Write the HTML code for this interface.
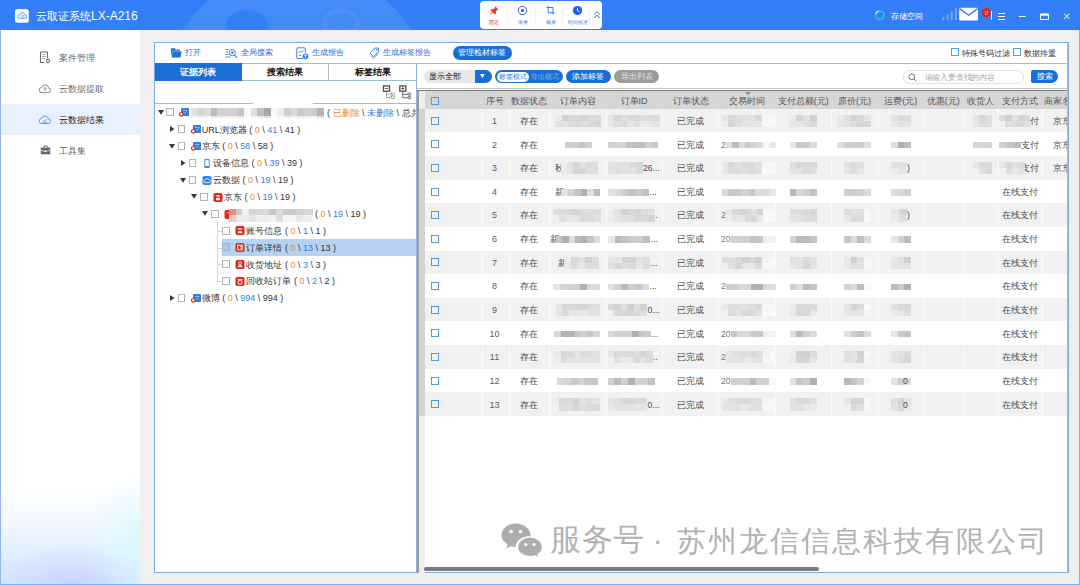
<!DOCTYPE html>
<html><head><meta charset="utf-8">
<style>
*{box-sizing:border-box;margin:0;padding:0}
html,body{width:1080px;height:585px;overflow:hidden;background:#f0f0f0;font-family:"Liberation Sans",sans-serif;font-size:9px;color:#333}
.abs{position:absolute}
#title{position:absolute;left:0;top:0;width:1080px;height:30px;background:#337ff8;overflow:hidden}
#title .c1{position:absolute;left:161px;top:-33px;width:272px;height:272px;border-radius:50%;background:rgba(255,255,255,.085)}
#title .c2{position:absolute;left:226px;top:10px;width:42px;height:30px;border-radius:50%;background:#337ff8}
#title .tt{position:absolute;left:36px;top:8px;font-size:11.500px;color:#fff;line-height:16px;white-space:nowrap}
#side{position:absolute;left:0;top:30px;width:140px;height:555px;background:#fff;border-left:1px solid #8db8f5;border-bottom:1px solid #8db8f5;overflow:hidden}
#side .glow{position:absolute;left:0;bottom:0;width:140px;height:150px;background:radial-gradient(ellipse 80px 42px at 72px 152px,rgba(200,208,255,.9) 0%,rgba(205,215,255,.45) 55%,rgba(255,255,255,0) 100%),radial-gradient(ellipse 62px 85px at 142px 118px,rgba(214,250,255,.95) 0%,rgba(222,250,255,.55) 50%,rgba(255,255,255,0) 100%),linear-gradient(180deg,rgba(255,255,255,0) 0,rgba(255,255,255,0) 35%,rgba(228,240,255,.55) 62%,rgba(208,226,255,.95) 100%)}
.nav{position:absolute;left:0;width:140px;height:31px;font-size:9px;color:#6a6a6a;line-height:33px;padding-left:58px;white-space:nowrap}
.nav.sel{background:#e9f1fe;color:#222}
.nav svg{position:absolute}
#panel{position:absolute;left:154px;top:42px;width:914.500px;height:531px;background:#fff;border:1px solid #79abec}
.tb{position:absolute;top:47px;font-size:7.9px;color:#1a6fd6;line-height:12px;white-space:nowrap}
.pill{position:absolute;border-radius:8px;color:#fff;text-align:center;white-space:nowrap;font-size:7.9px}
.tab{position:absolute;top:63px;height:18px;font-size:9px;font-weight:bold;color:#111;text-align:center;line-height:17px;border-top:1px solid #a4b9d6;border-bottom:1px solid #a4b9d6;border-right:1px solid #b8b8b8;background:#fff}
.tab.on{background:#1a6fd6;color:#fff;border-color:#1a6fd6}
.tr{position:absolute;height:17px;line-height:17px;font-size:9px;color:#333;white-space:pre}
.tr .cb{position:absolute;top:4px;width:8px;height:8px;border:1px solid #a8a8a8;background:#fff}
.tr .ar{position:absolute;top:0;font-size:7px;color:#333}
.tr .ic{position:absolute;top:4px;width:9px;height:9px;border-radius:2px}
.tr .tx{position:absolute;top:0}
.o{color:#f08a1e}.b{color:#2f7fe0}
.blur{position:absolute;background:#d9d9d9;filter:blur(1.5px)}
#hdr{position:absolute;left:425px;top:91px;width:632px;height:18px;background:#d5d5d5}
.th{position:absolute;top:91.600px;height:18px;line-height:18px;font-size:9px;color:#555;text-align:center;white-space:nowrap;transform:translateX(-50%)}
.row{position:absolute;left:425px;width:632px;height:23.6px}
.row.g{background:#f1f1f1}
.td{position:absolute;font-size:9px;color:#4a4a4a;white-space:nowrap;transform:translate(-50%,-50%);line-height:12px}
.tdl{position:absolute;font-size:8.600px;color:#4a4a4a;white-space:nowrap;transform:translate(0,-50%);line-height:12px}
.mz{position:absolute;overflow:hidden;filter:blur(.7px)}
.mz i{position:absolute;display:block}
.ck{position:absolute;left:431px;width:8px;height:8px;border:1px solid #4a8fdc;background:#fff}
.sm{position:absolute;background:#cfcfcf;filter:blur(1.2px);height:8px;border-radius:1px}
</style></head><body>
<div id="title">
 <div class="c1"></div><div class="c2"></div><div class="abs" style="left:322px;top:8px;width:38px;height:30px;border-radius:50%;border:5px solid rgba(255,255,255,.06)"></div>
 <svg class="abs" style="left:14.700px;top:9.300px" width="14" height="14" viewBox="0 0 14 14"><rect x="0" y="0" width="13.800" height="13.800" rx="2.500" fill="#fff"/><path d="M4.300 9.600h5.600a1.800 1.800 0 0 0 .3-3.600 2.800 2.800 0 0 0-5.400-.5A2.100 2.100 0 0 0 4.300 9.600z" fill="#e4effe" stroke="#6ea6f7" stroke-width="1"/><circle cx="7.800" cy="7.400" r="1" fill="none" stroke="#6ea6f7" stroke-width=".7"/></svg>
 <div class="tt"><span style="font-size:11px">云取证系统</span><span style="font-size:12px">LX-A216</span></div>

 <div class="abs" style="left:480.300px;top:1px;width:122.200px;height:27.700px;background:#fff;border-radius:4px"></div>
 <svg class="abs" style="left:480.500px;top:1px" width="122" height="27" viewBox="0 0 122 27">
  <g stroke="#eef1f7" stroke-width="1"><line x1="26.5" y1="5" x2="26.5" y2="22"/><line x1="54.5" y1="5" x2="54.5" y2="22"/><line x1="81.5" y1="5" x2="81.5" y2="22"/><line x1="108.5" y1="5" x2="108.5" y2="22"/></g>
  <path d="M14.2 5.2l3.4 3.2-1.2.4-1.6 1.8.2 2-1 .9-2-2-2.6 2.6-.4-.4 2.4-2.7-2-2 .9-1 2.1.2 1.6-1.7z" fill="#e8392c"/>
  <circle cx="41.5" cy="9.5" r="4.2" fill="none" stroke="#2563eb" stroke-width="1"/><circle cx="41.5" cy="9.5" r="1.6" fill="#2563eb"/>
  <path d="M67.200 4.800v7h6.500M65.500 6.500h6.500v7" fill="none" stroke="#3b7cf0" stroke-width="1"/>
  <circle cx="96.5" cy="9.5" r="4.6" fill="#1f5cf0"/><path d="M96.5 6.8v3l2 1.2" fill="none" stroke="#fff" stroke-width="1"/>
  <path d="M113 13.5l3-2.8 3 2.8M113 17l3-2.8 3 2.8" fill="none" stroke="#3b7cf0" stroke-width="1"/>
  <g font-family="Liberation Sans, sans-serif" font-size="4.5" text-anchor="middle"><text x="13" y="23" fill="#e8392c">固定</text><text x="41.5" y="23" fill="#4a7df0">录屏</text><text x="69.5" y="23" fill="#4a7df0">截屏</text><text x="96.5" y="23" fill="#4a7df0">时间校准</text></g>
 </svg>
 <svg class="abs" style="left:860px;top:0" width="220" height="30" viewBox="0 0 220 30">
  <circle cx="19.8" cy="15.3" r="4.2" fill="none" stroke="#35d3b5" stroke-width="1.3"/>
  <path d="M15.8 14a4.2 4.2 0 0 1 3-2.8" fill="none" stroke="#e8f4ff" stroke-width="1.3"/>
  <g fill="#a9a59c"><rect x="82.5" y="17" width="1.6" height="3"/><rect x="86.7" y="14.5" width="1.6" height="5.5"/><rect x="90.9" y="11.5" width="1.6" height="8.5"/><rect x="95.1" y="8" width="1.6" height="12"/></g>
  <rect x="99.2" y="7.8" width="18.8" height="12.6" rx="1" fill="#fff"/><path d="M99.6 8.6l9 6.6 9-6.6" fill="none" stroke="#327ff7" stroke-width="1.4"/>
  <circle cx="126.3" cy="12.6" r="4.7" fill="#d9262b"/><text x="126.3" y="14.8" font-size="6" fill="#f4c7c7" text-anchor="middle" font-family="Liberation Sans, sans-serif">0</text>
  <line x1="131.5" y1="11" x2="131.5" y2="20" stroke="#dfe9fb" stroke-width="1"/>
  <g stroke="#fff" stroke-width="1"><path d="M138 13.5h7M138 16.5h7M138 19.5h7"/><path d="M159 16.5h6.5"/><path d="M180.5 14h8v5.5h-8z" fill="none"/><path d="M180.5 14.8h8" stroke-width="1.8"/><path d="M204 13.5l5.5 5.5M209.500 13.5l-5.500 5.500"/></g>
 </svg>
 <div class="abs" style="left:891px;top:9.500px;font-size:8.300px;color:#fff;line-height:12px;white-space:nowrap">存储空间</div>
</div>
<div id="side">
 <div class="glow"></div>
 <div class="nav" style="top:12px"><svg width="13" height="13" viewBox="0 0 13 13" style="left:37.800px;top:9.200px"><path d="M1.500 1h7v6.500M5.500 11.500h-4v-10.500" fill="none" stroke="#707070" stroke-width="1.100"/><path d="M3 3.500h4M3 5.500h4M3 7.500h3" stroke="#a0a0a0" stroke-width=".8"/><circle cx="9" cy="10" r="1.600" fill="none" stroke="#707070" stroke-width="1.100"/></svg>案件管理</div>
 <div class="nav" style="top:43px"><svg width="12" height="9.500" viewBox="0 0 14 11" style="left:38px;top:11.200px"><path d="M3.500 10h7.200a2.700 2.700 0 0 0 .4-5.400 4.100 4.100 0 0 0-8-.6A3 3 0 0 0 3.500 10z" fill="none" stroke="#777" stroke-width="1"/><path d="M7 8.200v-4M5.300 5.600l1.700-1.700 1.700 1.700" fill="none" stroke="#777" stroke-width=".9"/></svg>云数据提取</div>
 <div class="nav sel" style="top:74px"><svg width="12" height="9.500" viewBox="0 0 14 11" style="left:38px;top:11.200px"><path d="M3.500 10h7.200a2.700 2.700 0 0 0 .4-5.400 4.100 4.100 0 0 0-8-.6A3 3 0 0 0 3.500 10z" fill="none" stroke="#4a90f5" stroke-width="1"/><path d="M4.800 6.200l1.700 1.600 3-3.300M4.500 8.500h5" fill="none" stroke="#4a90f5" stroke-width=".9"/></svg>云数据结果</div>
 <div class="nav" style="top:105px"><svg width="11" height="10" viewBox="0 0 12 11" style="left:38.500px;top:9.600px"><path d="M.8 2.800h10.400v7.400h-10.400z" fill="#666"/><path d="M4 2.800v-1.600h4v1.600" fill="none" stroke="#666" stroke-width="1"/><path d="M.8 5.800l5.200 1.500 5.200-1.500" fill="none" stroke="#fff" stroke-width=".7"/><rect x="5.200" y="5.800" width="1.600" height="1.600" fill="#fff"/></svg>工具集</div>
</div>
<div id="panel"></div>

<!-- toolbar -->
<svg class="abs" style="left:170px;top:47px" width="12" height="11" viewBox="0 0 12 11"><path d="M1 1.300h3.800l1 1.200h4.200v1.200h-7l-1.600 5.500z" fill="#1a6fd6"/><path d="M2.800 4.200h8.700l-1 6.200h-8.900z" fill="#1a6fd6"/></svg>
<div class="tb" style="left:185px">打开</div>
<svg class="abs" style="left:225px;top:47.500px" width="13" height="11" viewBox="0 0 13 11"><path d="M.5 1.500h3.500M.5 4h2.800M.5 6.500h3M.5 9h5" stroke="#3b82e0" stroke-width=".9"/><circle cx="7.300" cy="4.600" r="3.100" fill="none" stroke="#3b82e0" stroke-width="1"/><circle cx="7.300" cy="4.600" r="1.300" fill="#3b82e0"/><path d="M9.600 7l2.300 2.600" stroke="#3b82e0" stroke-width="1.200"/></svg>
<div class="tb" style="left:241px">全局搜索</div>
<svg class="abs" style="left:295.500px;top:46.500px" width="13" height="13" viewBox="0 0 13 13"><path d="M7 11.500h-5a1.200 1.200 0 0 1-1.200-1.200v-8.300a1.200 1.200 0 0 1 1.200-1.200h6.200a1.200 1.200 0 0 1 1.200 1.200v3.800" fill="none" stroke="#3b82e0" stroke-width="1"/><path d="M2.500 6l1.800-2 1.500 1.200 2-2" fill="none" stroke="#3b82e0" stroke-width=".8"/><path d="M2.500 8.300h3" stroke="#3b82e0" stroke-width=".8"/><circle cx="9.500" cy="9.300" r="2.900" fill="#3b82e0"/><path d="M9.500 11v-3.200M8.200 8.900l1.300-1.300 1.300 1.300" fill="none" stroke="#fff" stroke-width=".8"/></svg>
<div class="tb" style="left:312px">生成报告</div>
<svg class="abs" style="left:368.500px;top:47px" width="11" height="12" viewBox="0 0 11 12"><path d="M5.800 1h3.700v3.700l-5 5-3.600-3.600z" fill="none" stroke="#3b82e0" stroke-width="1"/><circle cx="7.600" cy="2.900" r=".8" fill="#3b82e0"/><path d="M2 8.600l2.600 2.600 5.200-5.200" fill="none" stroke="#3b82e0" stroke-width=".9"/></svg>
<div class="tb" style="left:383px">生成标签报告</div>
<div class="pill" style="left:453px;top:46px;width:58.500px;height:13.500px;line-height:13.500px;background:#1a6fd6;border-radius:7px">管理检材标签</div>
<div class="abs" style="left:950.500px;top:48.200px;width:8.200px;height:8px;border:1px solid #5b9ce6;background:#fff"></div>
<div class="tb" style="left:962px;color:#333;top:47.500px">特殊号码过滤</div>
<div class="abs" style="left:1013.300px;top:48.200px;width:8px;height:8px;border:1px solid #5b9ce6;background:#fff"></div>
<div class="tb" style="left:1024px;color:#333;top:47.500px">数据排重</div>
<!-- tabs -->
<div class="abs" style="left:155px;top:63px;width:912px;height:1px;background:#a4bcdc"></div>
<div class="tab on" style="left:155px;width:87px">证据列表</div>
<div class="tab" style="left:242px;width:87px">搜索结果</div>
<div class="tab" style="left:329px;width:88px">标签结果</div>
<!-- left tree panel -->
<div class="abs" style="left:416px;top:64px;width:1.300px;height:509px;background:#92b3df"></div>
<div class="abs" style="left:155px;top:103px;width:262px;height:1px;background:#9ab8e0"></div>
<svg class="abs" style="left:382px;top:84px" width="30" height="16" viewBox="0 0 30 16"><g fill="none" stroke="#4a4a4a"><rect x="1.500" y="1.900" width="6" height="5.300" stroke-width="1.300"/><path d="M3.200 4.500h2.600" stroke-width="1"/><rect x="17.800" y="1.900" width="6" height="5.300" stroke-width="1.300"/><path d="M19.500 4.500h2.600M20.800 3.200v2.600" stroke-width="1"/><g stroke="#666" stroke-width=".9" stroke-dasharray="1 .7"><path d="M4.500 7.800v6h4M4.500 10.300h4"/><rect x="9" y="9" width="3.200" height="2.300"/><rect x="9" y="12.300" width="3.200" height="2.300"/></g><g stroke="#555" stroke-width=".9"><path d="M20.800 7.800v6h5.200M20.800 10.300h5.200"/><rect x="26" y="9" width="2.800" height="2.300" rx="1"/><rect x="26" y="12.300" width="2.800" height="2.300" rx="1"/></g></g></svg>
<!--TREE_S-->
<div class="abs" style="left:216.500px;top:222px;width:1px;height:60px;background:#d6d6d6"></div>
<svg class="abs" style="left:157.6px;top:110.1px" width="6" height="5" viewBox="0 0 6 5"><path d="M0 0h6l-3 4.800z" fill="#3a3a3a"/></svg>
<div class="abs" style="left:166.3px;top:108.4px;width:7.800px;height:8px;border:1px solid #b4b4b4;background:#fff"></div>
<svg class="abs" style="top:108.3px;left:179.3px" width="10" height="9" viewBox="0 0 10 9"><rect x="2" y="0" width="8" height="8" rx=".8" fill="#2f7fe0"/><path d="M4 2.500h4.500M4.500 4l1.200 1.300 2-2" stroke="#9cc4f5" stroke-width=".8" fill="none"/><circle cx="2.300" cy="6.300" r="1.800" fill="#fff" stroke="#d8232a" stroke-width="1.200"/></svg>
<div class="abs" style="left:253px;top:101px;width:60px;height:6px;background:#fff;filter:blur(1px)"></div>
<div class="mz" style="left:190.500px;top:107.6px;width:133.500px;height:10.500px;filter:blur(.7px)"><i style="left:0.0px;top:0;width:7.0px;height:8px;background:#e4e4e4"></i><i style="left:6.7px;top:0;width:7.0px;height:8px;background:#d6d6d6"></i><i style="left:13.3px;top:0;width:7.0px;height:8px;background:#dedede"></i><i style="left:20.0px;top:0;width:7.0px;height:8px;background:#bcbcbc"></i><i style="left:26.7px;top:0;width:7.0px;height:8px;background:#cfcfd4"></i><i style="left:33.4px;top:0;width:7.0px;height:8px;background:#d2d2d2"></i><i style="left:40.0px;top:0;width:7.0px;height:8px;background:#d0d0d0"></i><i style="left:46.7px;top:0;width:7.0px;height:8px;background:#c4c4c4"></i><i style="left:53.4px;top:0;width:7.0px;height:8px;background:#fafafa"></i><i style="left:60.0px;top:0;width:7.0px;height:8px;background:#e0e0de"></i><i style="left:66.7px;top:0;width:7.0px;height:8px;background:#c0c0bc"></i><i style="left:73.4px;top:0;width:7.0px;height:8px;background:#a8a8ac"></i><i style="left:80.0px;top:0;width:7.0px;height:8px;background:#f6f8fa"></i><i style="left:86.7px;top:0;width:7.0px;height:8px;background:#ececec"></i><i style="left:93.4px;top:0;width:7.0px;height:8px;background:#d0cfcd"></i><i style="left:100.0px;top:0;width:7.0px;height:8px;background:#dcdcdc"></i><i style="left:106.7px;top:0;width:7.0px;height:8px;background:#cfcbc8"></i><i style="left:113.4px;top:0;width:7.0px;height:8px;background:#d2d0ce"></i><i style="left:120.1px;top:0;width:7.0px;height:8px;background:#cccccc"></i><i style="left:126.7px;top:0;width:7.0px;height:8px;background:#b4b4b6"></i><i style="left:0.0px;top:8px;width:7.0px;height:2.500px;background:#e4e4e4;opacity:.35"></i><i style="left:6.7px;top:8px;width:7.0px;height:2.500px;background:#d6d6d6;opacity:.35"></i><i style="left:13.3px;top:8px;width:7.0px;height:2.500px;background:#dedede;opacity:.35"></i><i style="left:20.0px;top:8px;width:7.0px;height:2.500px;background:#bcbcbc;opacity:.35"></i><i style="left:26.7px;top:8px;width:7.0px;height:2.500px;background:#cfcfd4;opacity:.35"></i><i style="left:33.4px;top:8px;width:7.0px;height:2.500px;background:#d2d2d2;opacity:.35"></i><i style="left:40.0px;top:8px;width:7.0px;height:2.500px;background:#d0d0d0;opacity:.35"></i><i style="left:46.7px;top:8px;width:7.0px;height:2.500px;background:#c4c4c4;opacity:.35"></i><i style="left:53.4px;top:8px;width:7.0px;height:2.500px;background:#fafafa;opacity:.35"></i><i style="left:60.0px;top:8px;width:7.0px;height:2.500px;background:#e0e0de;opacity:.35"></i><i style="left:66.7px;top:8px;width:7.0px;height:2.500px;background:#c0c0bc;opacity:.35"></i><i style="left:73.4px;top:8px;width:7.0px;height:2.500px;background:#a8a8ac;opacity:.35"></i><i style="left:80.0px;top:8px;width:7.0px;height:2.500px;background:#f6f8fa;opacity:.35"></i><i style="left:86.7px;top:8px;width:7.0px;height:2.500px;background:#ececec;opacity:.35"></i><i style="left:93.4px;top:8px;width:7.0px;height:2.500px;background:#d0cfcd;opacity:.35"></i><i style="left:100.0px;top:8px;width:7.0px;height:2.500px;background:#dcdcdc;opacity:.35"></i><i style="left:106.7px;top:8px;width:7.0px;height:2.500px;background:#cfcbc8;opacity:.35"></i><i style="left:113.4px;top:8px;width:7.0px;height:2.500px;background:#d2d0ce;opacity:.35"></i><i style="left:120.1px;top:8px;width:7.0px;height:2.500px;background:#cccccc;opacity:.35"></i><i style="left:126.7px;top:8px;width:7.0px;height:2.500px;background:#b4b4b6;opacity:.35"></i></div>
<div class="tr" style="left:324.500px;top:104.7px;width:91.500px;overflow:hidden"> ( <span class="o">已删除</span> \ <span class="b">未删除</span> \ 总共</div>
<svg class="abs" style="left:169.7px;top:126.3px" width="5" height="6" viewBox="0 0 5 6"><path d="M0 0v6l4.500-3z" fill="#3a3a3a"/></svg>
<div class="abs" style="left:177.5px;top:125.3px;width:7.800px;height:8px;border:1px solid #b4b4b4;background:#fff"></div>
<svg class="abs" style="top:125.2px;left:190.5px" width="10" height="9" viewBox="0 0 10 9"><rect x="2" y="0" width="8" height="8" rx=".8" fill="#2f7fe0"/><path d="M4 2.500h4.500M4.500 4l1.200 1.300 2-2" stroke="#9cc4f5" stroke-width=".8" fill="none"/><circle cx="2.300" cy="6.300" r="1.800" fill="#fff" stroke="#d8232a" stroke-width="1.200"/></svg>
<div class="tr" style="left:201.7px;top:121.6px">URL浏览器 ( <span class="o">0</span> \ <span class="b">41</span> \ 41 )</div>
<svg class="abs" style="left:168.8px;top:143.8px" width="6" height="5" viewBox="0 0 6 5"><path d="M0 0h6l-3 4.800z" fill="#3a3a3a"/></svg>
<div class="abs" style="left:177.5px;top:142.1px;width:7.800px;height:8px;border:1px solid #b4b4b4;background:#fff"></div>
<svg class="abs" style="top:142.0px;left:190.5px" width="10" height="9" viewBox="0 0 10 9"><rect x="2" y="0" width="8" height="8" rx=".8" fill="#2f7fe0"/><path d="M4 2.500h4.500M4.500 4l1.200 1.300 2-2" stroke="#9cc4f5" stroke-width=".8" fill="none"/><circle cx="2.300" cy="6.300" r="1.800" fill="#fff" stroke="#d8232a" stroke-width="1.200"/></svg>
<div class="tr" style="left:201.7px;top:138.4px">京东 ( <span class="o">0</span> \ <span class="b">58</span> \ 58 )</div>
<svg class="abs" style="left:180.9px;top:160.0px" width="5" height="6" viewBox="0 0 5 6"><path d="M0 0v6l4.500-3z" fill="#3a3a3a"/></svg>
<div class="abs" style="left:188.7px;top:159.0px;width:7.800px;height:8px;border:1px solid #b4b4b4;background:#fff"></div>
<svg class="abs" style="top:158.9px;left:201.7px" width="10" height="9" viewBox="0 0 10 9"><rect x="2.300" y="0" width="5.400" height="9" rx="1" fill="#3b8bea"/><rect x="3.200" y="1.200" width="3.600" height="5.800" fill="#fff"/></svg>
<div class="tr" style="left:212.9px;top:155.3px">设备信息 ( <span class="o">0</span> \ <span class="b">39</span> \ 39 )</div>
<svg class="abs" style="left:180.0px;top:177.6px" width="6" height="5" viewBox="0 0 6 5"><path d="M0 0h6l-3 4.800z" fill="#3a3a3a"/></svg>
<div class="abs" style="left:188.7px;top:175.9px;width:7.800px;height:8px;border:1px solid #b4b4b4;background:#fff"></div>
<svg class="abs" style="top:175.8px;left:201.7px" width="10" height="9" viewBox="0 0 10 9"><rect x=".5" y="0" width="9" height="9" rx="1.800" fill="#2a86f0"/><path d="M3.200 6.600h3.800a1.300 1.300 0 0 0 .1-2.600 2 2 0 0 0-3.800-.2 1.400 1.400 0 0 0-.1 2.800z" fill="none" stroke="#fff" stroke-width=".8"/></svg>
<div class="tr" style="left:212.9px;top:172.2px">云数据 ( <span class="o">0</span> \ <span class="b">19</span> \ 19 )</div>
<svg class="abs" style="left:191.1px;top:194.4px" width="6" height="5" viewBox="0 0 6 5"><path d="M0 0h6l-3 4.800z" fill="#3a3a3a"/></svg>
<div class="abs" style="left:199.8px;top:192.8px;width:7.800px;height:8px;border:1px solid #b4b4b4;background:#fff"></div>
<svg class="abs" style="top:192.6px;left:212.8px" width="10" height="9" viewBox="0 0 10 9"><rect x=".5" y="0" width="9" height="9" rx="1.800" fill="#e1251b"/><path d="M3.500 2h3v1.500h-3zM3 4.800h4v2.400h-4z" fill="#fff"/></svg>
<div class="tr" style="left:224.0px;top:189.0px">京东 ( <span class="o">0</span> \ <span class="b">19</span> \ 19 )</div>
<svg class="abs" style="left:202.3px;top:211.3px" width="6" height="5" viewBox="0 0 6 5"><path d="M0 0h6l-3 4.800z" fill="#3a3a3a"/></svg>
<div class="abs" style="left:211.0px;top:209.6px;width:7.800px;height:8px;border:1px solid #b4b4b4;background:#fff"></div>
<svg class="abs" style="top:209.5px;left:224.0px" width="10" height="9" viewBox="0 0 10 9"><rect x=".5" y="0" width="9" height="9" rx="1.800" fill="#e1251b"/><path d="M3.200 2.200l1.500 1.300 1.500-1.300" stroke="#fff" stroke-width=".8" fill="none"/></svg>
<div class="mz" style="left:229px;top:208.6px;width:83.700px;height:13px;filter:blur(.7px)"><i style="left:0.0px;top:0;width:7.0px;height:6.600px;background:#ee8888"></i><i style="left:6.7px;top:0;width:7.0px;height:6.600px;background:#c8ccd0"></i><i style="left:13.4px;top:0;width:7.0px;height:6.600px;background:#f0f0f0"></i><i style="left:20.1px;top:0;width:7.0px;height:6.600px;background:#d6d6d6"></i><i style="left:26.8px;top:0;width:7.0px;height:6.600px;background:#d8d8d8"></i><i style="left:33.5px;top:0;width:7.0px;height:6.600px;background:#dadada"></i><i style="left:40.2px;top:0;width:7.0px;height:6.600px;background:#c6c6c6"></i><i style="left:46.9px;top:0;width:7.0px;height:6.600px;background:#d8d8d8"></i><i style="left:53.6px;top:0;width:7.0px;height:6.600px;background:#cacaca"></i><i style="left:60.3px;top:0;width:7.0px;height:6.600px;background:#c8c8c8"></i><i style="left:67.0px;top:0;width:7.0px;height:6.600px;background:#d2d2d2"></i><i style="left:73.7px;top:0;width:7.0px;height:6.600px;background:#d6d6d6"></i><i style="left:80.4px;top:0;width:7.0px;height:6.600px;background:#d6d6d6"></i><i style="left:0.0px;top:6.600px;width:7.0px;height:6.400px;background:#f6c4c4"></i><i style="left:6.7px;top:6.600px;width:7.0px;height:6.400px;background:#e6eaee"></i><i style="left:13.4px;top:6.600px;width:7.0px;height:6.400px;background:#ececec"></i><i style="left:20.1px;top:6.600px;width:7.0px;height:6.400px;background:#e4e4e4"></i><i style="left:26.8px;top:6.600px;width:7.0px;height:6.400px;background:#f0f0f0"></i><i style="left:33.5px;top:6.600px;width:7.0px;height:6.400px;background:#ececec"></i><i style="left:40.2px;top:6.600px;width:7.0px;height:6.400px;background:#f2f2f2"></i><i style="left:46.9px;top:6.600px;width:7.0px;height:6.400px;background:#dcdcdc"></i><i style="left:53.6px;top:6.600px;width:7.0px;height:6.400px;background:#f4f4f4"></i><i style="left:60.3px;top:6.600px;width:7.0px;height:6.400px;background:#f4f4f0"></i><i style="left:67.0px;top:6.600px;width:7.0px;height:6.400px;background:#e8e8e8"></i><i style="left:73.7px;top:6.600px;width:7.0px;height:6.400px;background:#f0f0f0"></i><i style="left:80.4px;top:6.600px;width:7.0px;height:6.400px;background:#f0f0f0"></i></div>
<div class="tr" style="left:312.500px;top:205.9px"> ( <span class="o">0</span> \ <span class="b">19</span> \ 19 )</div>
<div class="abs" style="left:216.500px;top:230.7px;width:6px;height:1px;background:#d6d6d6"></div>
<div class="abs" style="left:222.2px;top:226.5px;width:7.800px;height:8px;border:1px solid #b4b4b4;background:#fff"></div>
<svg class="abs" style="top:226.4px;left:235.2px" width="10" height="9" viewBox="0 0 10 9"><rect x=".5" y="0" width="9" height="9" rx="1.800" fill="#e1251b"/><path d="M2.800 2.200h4.400v1.400h-4.400zM3.400 5h3.200l.8 2.200h-4.800z" fill="#fff"/></svg>
<div class="tr" style="left:246.4px;top:222.8px">账号信息 ( <span class="o">0</span> \ <span class="b">1</span> \ 1 )</div>
<div class="abs" style="left:222px;top:239.4px;width:194px;height:16.200px;background:#b7d3f1"></div>
<div class="abs" style="left:216.500px;top:247.6px;width:6px;height:1px;background:#d6d6d6"></div>
<div class="abs" style="left:222.2px;top:243.4px;width:7.800px;height:8px;border:1px solid #9fb6d2;background:#adc9ec"></div>
<svg class="abs" style="top:243.3px;left:235.2px" width="10" height="9" viewBox="0 0 10 9"><rect x=".5" y="0" width="9" height="9" rx="1.800" fill="#e1251b"/><rect x="2.800" y="2" width="4.400" height="5" fill="none" stroke="#fff" stroke-width=".9"/><path d="M5 3.500h2M5 5.200h2" stroke="#fff" stroke-width=".8"/></svg>
<div class="tr" style="left:246.4px;top:239.7px">订单详情 ( <span class="o">0</span> \ <span class="b">13</span> \ 13 )</div>
<div class="abs" style="left:216.500px;top:264.4px;width:6px;height:1px;background:#d6d6d6"></div>
<div class="abs" style="left:222.2px;top:260.2px;width:7.800px;height:8px;border:1px solid #b4b4b4;background:#fff"></div>
<svg class="abs" style="top:260.1px;left:235.2px" width="10" height="9" viewBox="0 0 10 9"><rect x=".5" y="0" width="9" height="9" rx="1.800" fill="#e1251b"/><circle cx="5" cy="3.300" r="1.400" fill="none" stroke="#fff" stroke-width=".9"/><path d="M2.600 7.300a2.400 2.400 0 0 1 4.800 0z" fill="#fff"/></svg>
<div class="tr" style="left:246.4px;top:256.5px">收货地址 ( <span class="o">0</span> \ <span class="b">3</span> \ 3 )</div>
<div class="abs" style="left:216.500px;top:281.3px;width:6px;height:1px;background:#d6d6d6"></div>
<div class="abs" style="left:222.2px;top:277.1px;width:7.800px;height:8px;border:1px solid #b4b4b4;background:#fff"></div>
<svg class="abs" style="top:277.0px;left:235.2px" width="10" height="9" viewBox="0 0 10 9"><rect x=".5" y="0" width="9" height="9" rx="1.800" fill="#e1251b"/><path d="M2.600 2.600h4.800M3.300 3.600h3.400v3.600h-3.400z" fill="none" stroke="#fff" stroke-width=".9"/></svg>
<div class="tr" style="left:246.4px;top:273.4px">回收站订单 ( <span class="o">0</span> \ <span class="b">2</span> \ 2 )</div>
<svg class="abs" style="left:169.7px;top:295.0px" width="5" height="6" viewBox="0 0 5 6"><path d="M0 0v6l4.500-3z" fill="#3a3a3a"/></svg>
<div class="abs" style="left:177.5px;top:294.0px;width:7.800px;height:8px;border:1px solid #b4b4b4;background:#fff"></div>
<svg class="abs" style="top:293.9px;left:190.5px" width="10" height="9" viewBox="0 0 10 9"><rect x="2" y="0" width="8" height="8" rx=".8" fill="#2f7fe0"/><path d="M4 2.500h4.500M4.500 4l1.200 1.300 2-2" stroke="#9cc4f5" stroke-width=".8" fill="none"/><circle cx="2.300" cy="6.300" r="1.800" fill="#fff" stroke="#d8232a" stroke-width="1.200"/></svg>
<div class="tr" style="left:201.7px;top:290.3px">微博 ( <span class="o">0</span> \ <span class="b">994</span> \ 994 )</div>
<!--TREE_E-->
<!-- splitter -->
<div class="abs" style="left:418.800px;top:91px;width:6px;height:482px;background:#f0f0f0"></div>
<div class="abs" style="left:418.800px;top:108.800px;width:6px;height:307.200px;background:#d2d2d2"></div>
<div class="abs" style="left:417.300px;top:90px;width:1.600px;height:483px;background:#9a9aa0"></div>
<!-- filter bar -->
<div class="abs" style="left:423.500px;top:70px;width:68px;height:13px;border-radius:6.500px;background:#e7e7e7;overflow:hidden"><div class="abs" style="left:51.500px;top:0;width:17px;height:13px;background:#1a6fd6"></div><div class="abs" style="left:5.500px;top:0;font-size:8px;line-height:13px;color:#222;white-space:nowrap">显示全部</div><svg class="abs" style="left:56.500px;top:4.300px" width="4.800" height="4.200" viewBox="0 0 6 5"><path d="M0 0h6l-3 5z" fill="#fff"/></svg></div>
<div class="abs" style="left:495px;top:70px;width:67.500px;height:13px;border-radius:6.500px;background:#1a6fd6"><div class="abs" style="left:1.500px;top:1.500px;width:32.500px;height:10px;border-radius:5px;background:#fff;color:#2a78da;font-size:6.700px;line-height:10px;text-align:center;white-space:nowrap">标签模式</div><div class="abs" style="left:36px;top:0;font-size:6.700px;line-height:13px;color:#86b4ee;white-space:nowrap">导出模式</div></div>
<div class="pill" style="left:566px;top:70px;width:44.500px;height:13px;line-height:13px;background:#1a6fd6;border-radius:6.500px;font-size:8px">添加标签</div>
<div class="pill" style="left:614px;top:70px;width:45px;height:13px;line-height:13px;background:#9b9b9b;border-radius:6.500px;font-size:8px;color:#e4e4e4">导出列表</div>
<div class="abs" style="left:903px;top:69.600px;width:121.300px;height:14.800px;border:1px solid #e0e0e0;border-radius:7.400px;background:#fff"></div>
<svg class="abs" style="left:908px;top:72.500px" width="9" height="9" viewBox="0 0 9 9"><circle cx="3.800" cy="3.800" r="2.900" fill="none" stroke="#666" stroke-width=".9"/><path d="M6 6l2.300 2.300" stroke="#666" stroke-width=".9"/></svg>
<div class="abs" style="left:924.700px;top:70.700px;font-size:7.500px;letter-spacing:-.2px;line-height:13px;color:#a8a8a8;white-space:nowrap">请输入要查找的内容</div>
<div class="abs" style="left:1031px;top:70px;width:27px;height:13px;background:#1a6fd6;border-radius:2px 6.500px 6.500px 2px;color:#fff;font-size:8px;line-height:13px;text-align:center">搜索</div>
<!-- scrollbar + watermark -->
<div class="abs" style="left:423.500px;top:566.500px;width:395px;height:4.500px;background:#7b7b7b;border-radius:2px"></div>
<div class="abs" style="left:1067px;top:43px;width:.6px;height:530px;background:#9cc0f2"></div>
<svg class="abs" style="left:501px;top:523px" width="42" height="35" viewBox="0 0 42 35"><path d="M15 .5c8 0 14.500 5.200 14.500 11.700 0 .4 0 .8-.1 1.200-8.200-.6-14.800 4.600-14.800 10.600-1 0-3.200-.3-4.600-.8l-4.600 2.400 1.300-4.200c-3.700-2.300-6.200-5.400-6.200-9.200 0-6.500 6.500-11.700 14.500-11.700z" fill="#adadad"/><circle cx="10" cy="8.500" r="1.800" fill="#fff"/><circle cx="19.500" cy="8.500" r="1.800" fill="#fff"/><path d="M29 14c7 0 12.500 4.500 12.500 10 0 3-1.800 5.700-4.600 7.600l1 3.200-3.700-1.900c-1.600.5-3.400.8-5.200.8-7 0-12.500-4.400-12.500-9.800s5.500-9.900 12.500-9.900z" fill="#adadad" stroke="#fff" stroke-width="1.200"/><circle cx="24.800" cy="21.500" r="1.500" fill="#fff"/><circle cx="33" cy="21.500" r="1.500" fill="#fff"/></svg>
<div class="abs" style="left:549.700px;top:520.300px;font-size:31px;line-height:40px;letter-spacing:.9px;color:#b2b2b2;white-space:pre">服务号</div><div class="abs" style="left:652.500px;top:520.500px;font-size:31px;line-height:40px;color:#b2b2b2">·</div><div class="abs" style="left:676.800px;top:521.300px;font-size:29px;line-height:40px;letter-spacing:2px;color:#b2b2b2;white-space:pre">苏州龙信信息科技有限公司</div>
<div class="abs" style="left:0;top:584px;width:1080px;height:1px;background:#7fb0f5"></div>
<div class="abs" style="left:1079px;top:30px;width:1px;height:555px;background:#7fb0f5"></div>

<!-- table -->
<div class="abs" style="left:417.300px;top:87.700px;width:650px;height:.7px;background:#c4c4c4"></div><div class="abs" style="left:417.300px;top:89.700px;width:649.400px;height:1.200px;background:#7c7c7c"></div>
<!--TABLE_S-->
<div class="abs" style="left:425px;top:91px;width:641.5px;height:17.800px;background:#d6d6d6"></div>
<div class="abs" style="left:431px;top:97px;width:8px;height:8px;border:1px solid #5596e3;background:#d6d6d6"></div>
<div class="th" style="left:495px">序号</div>
<div class="th" style="left:529px">数据状态</div>
<div class="th" style="left:578.4px">订单内容</div>
<div class="th" style="left:634px">订单ID</div>
<div class="th" style="left:690.8px">订单状态</div>
<div class="th" style="left:746.6px">交易时间</div>
<div class="th" style="left:803.2px">支付总额(元)</div>
<div class="th" style="left:854.4px">原价(元)</div>
<div class="th" style="left:900.7px">运费(元)</div>
<div class="th" style="left:943.2px">优惠(元)</div>
<div class="th" style="left:980.3px">收货人</div>
<div class="th" style="left:1020.3px">支付方式</div>
<div class="abs" style="left:1044px;top:91px;width:22.5px;height:18px;overflow:hidden"><div class="th" style="left:0;top:.6px;transform:none">商家名称</div></div>
<svg class="abs" style="left:744.500px;top:91.500px" width="6" height="3" viewBox="0 0 6 3"><path d="M0 0h6l-3 3z" fill="#8a8a8a"/></svg>
<div class="abs" style="left:425px;top:108.80px;width:641.5px;height:23.63px;background:#f1f1f1"></div>
<div class="abs" style="left:482.0px;top:108.80px;width:1px;height:23.63px;background:#fafafa"></div>
<div class="abs" style="left:508.6px;top:108.80px;width:1px;height:23.63px;background:#fafafa"></div>
<div class="abs" style="left:549.0px;top:108.80px;width:1px;height:23.63px;background:#fafafa"></div>
<div class="abs" style="left:606.4px;top:108.80px;width:1px;height:23.63px;background:#fafafa"></div>
<div class="abs" style="left:662.3px;top:108.80px;width:1px;height:23.63px;background:#fafafa"></div>
<div class="abs" style="left:717.9px;top:108.80px;width:1px;height:23.63px;background:#fafafa"></div>
<div class="abs" style="left:774.6px;top:108.80px;width:1px;height:23.63px;background:#fafafa"></div>
<div class="abs" style="left:831.3px;top:108.80px;width:1px;height:23.63px;background:#fafafa"></div>
<div class="abs" style="left:877.6px;top:108.80px;width:1px;height:23.63px;background:#fafafa"></div>
<div class="abs" style="left:923.6px;top:108.80px;width:1px;height:23.63px;background:#fafafa"></div>
<div class="abs" style="left:962.6px;top:108.80px;width:1px;height:23.63px;background:#fafafa"></div>
<div class="abs" style="left:998.2px;top:108.80px;width:1px;height:23.63px;background:#fafafa"></div>
<div class="abs" style="left:1042.3px;top:108.80px;width:1px;height:23.63px;background:#fafafa"></div>
<div class="abs" style="left:431px;top:116.6px;width:8px;height:8px;border:1px solid #5596e3"></div>
<div class="td" style="left:494.5px;top:120.9px;color:#5a5a5a">1</div>
<div class="td" style="left:529px;top:120.9px">存在</div>
<div class="td" style="left:690.8px;top:120.9px">已完成</div>
<div class="mz" style="left:555.0px;top:114.7px;width:46.0px;height:12.4px"><i style="left:0.0px;top:0.0px;width:6.9px;height:6.5px;background:rgb(234,234,238)"></i><i style="left:6.6px;top:0.0px;width:6.9px;height:6.5px;background:rgb(208,208,208)"></i><i style="left:13.1px;top:0.0px;width:6.9px;height:6.5px;background:rgb(216,216,216)"></i><i style="left:19.7px;top:0.0px;width:6.9px;height:6.5px;background:rgb(218,216,214)"></i><i style="left:26.3px;top:0.0px;width:6.9px;height:6.5px;background:rgb(212,212,212)"></i><i style="left:32.9px;top:0.0px;width:6.9px;height:6.5px;background:rgb(220,220,220)"></i><i style="left:39.4px;top:0.0px;width:6.9px;height:6.5px;background:rgb(216,218,222)"></i><i style="left:0.0px;top:6.2px;width:6.9px;height:6.5px;background:rgb(224,224,224)"></i><i style="left:6.6px;top:6.2px;width:6.9px;height:6.5px;background:rgb(226,226,226)"></i><i style="left:13.1px;top:6.2px;width:6.9px;height:6.5px;background:rgb(220,222,226)"></i><i style="left:19.7px;top:6.2px;width:6.9px;height:6.5px;background:rgb(218,218,218)"></i><i style="left:26.3px;top:6.2px;width:6.9px;height:6.5px;background:rgb(222,222,226)"></i><i style="left:32.9px;top:6.2px;width:6.9px;height:6.5px;background:rgb(218,218,218)"></i><i style="left:39.4px;top:6.2px;width:6.9px;height:6.5px;background:rgb(214,214,214)"></i></div>
<div class="mz" style="left:607.5px;top:114.7px;width:52.5px;height:12.4px"><i style="left:0.0px;top:0.0px;width:6.9px;height:6.5px;background:rgb(230,230,230)"></i><i style="left:6.6px;top:0.0px;width:6.9px;height:6.5px;background:rgb(214,214,218)"></i><i style="left:13.1px;top:0.0px;width:6.9px;height:6.5px;background:rgb(222,224,228)"></i><i style="left:19.7px;top:0.0px;width:6.9px;height:6.5px;background:rgb(218,218,218)"></i><i style="left:26.2px;top:0.0px;width:6.9px;height:6.5px;background:rgb(216,216,216)"></i><i style="left:32.8px;top:0.0px;width:6.9px;height:6.5px;background:rgb(222,222,222)"></i><i style="left:39.4px;top:0.0px;width:6.9px;height:6.5px;background:rgb(218,218,218)"></i><i style="left:45.9px;top:0.0px;width:6.9px;height:6.5px;background:rgb(222,220,218)"></i><i style="left:0.0px;top:6.2px;width:6.9px;height:6.5px;background:rgb(232,232,232)"></i><i style="left:6.6px;top:6.2px;width:6.9px;height:6.5px;background:rgb(222,222,222)"></i><i style="left:13.1px;top:6.2px;width:6.9px;height:6.5px;background:rgb(218,218,218)"></i><i style="left:19.7px;top:6.2px;width:6.9px;height:6.5px;background:rgb(226,228,232)"></i><i style="left:26.2px;top:6.2px;width:6.9px;height:6.5px;background:rgb(220,222,226)"></i><i style="left:32.8px;top:6.2px;width:6.9px;height:6.5px;background:rgb(230,232,236)"></i><i style="left:39.4px;top:6.2px;width:6.9px;height:6.5px;background:rgb(234,232,230)"></i><i style="left:45.9px;top:6.2px;width:6.9px;height:6.5px;background:rgb(228,228,232)"></i></div>
<div class="mz" style="left:721.7px;top:114.7px;width:54.1px;height:12.4px"><i style="left:0.0px;top:0.0px;width:7.1px;height:6.5px;background:rgb(228,228,232)"></i><i style="left:6.8px;top:0.0px;width:7.1px;height:6.5px;background:rgb(216,216,216)"></i><i style="left:13.5px;top:0.0px;width:7.1px;height:6.5px;background:rgb(222,222,222)"></i><i style="left:20.3px;top:0.0px;width:7.1px;height:6.5px;background:rgb(228,226,224)"></i><i style="left:27.0px;top:0.0px;width:7.1px;height:6.5px;background:rgb(228,226,224)"></i><i style="left:33.8px;top:0.0px;width:7.1px;height:6.5px;background:rgb(216,216,216)"></i><i style="left:40.6px;top:0.0px;width:7.1px;height:6.5px;background:rgb(244,246,250)"></i><i style="left:47.3px;top:0.0px;width:7.1px;height:6.5px;background:rgb(250,248,246)"></i><i style="left:0.0px;top:6.2px;width:7.1px;height:6.5px;background:rgb(234,236,240)"></i><i style="left:6.8px;top:6.2px;width:7.1px;height:6.5px;background:rgb(214,214,214)"></i><i style="left:13.5px;top:6.2px;width:7.1px;height:6.5px;background:rgb(222,222,222)"></i><i style="left:20.3px;top:6.2px;width:7.1px;height:6.5px;background:rgb(232,230,228)"></i><i style="left:27.0px;top:6.2px;width:7.1px;height:6.5px;background:rgb(230,230,230)"></i><i style="left:33.8px;top:6.2px;width:7.1px;height:6.5px;background:rgb(232,232,232)"></i><i style="left:40.6px;top:6.2px;width:7.1px;height:6.5px;background:rgb(248,248,248)"></i><i style="left:47.3px;top:6.2px;width:7.1px;height:6.5px;background:rgb(250,248,246)"></i></div>
<div class="mz" style="left:789.7px;top:114.7px;width:27.3px;height:12.4px"><i style="left:0.0px;top:0.0px;width:7.1px;height:6.5px;background:rgb(236,236,236)"></i><i style="left:6.8px;top:0.0px;width:7.1px;height:6.5px;background:rgb(214,212,210)"></i><i style="left:13.6px;top:0.0px;width:7.1px;height:6.5px;background:rgb(228,226,224)"></i><i style="left:20.5px;top:0.0px;width:7.1px;height:6.5px;background:rgb(210,208,206)"></i><i style="left:0.0px;top:6.2px;width:7.1px;height:6.5px;background:rgb(228,230,234)"></i><i style="left:6.8px;top:6.2px;width:7.1px;height:6.5px;background:rgb(230,230,234)"></i><i style="left:13.6px;top:6.2px;width:7.1px;height:6.5px;background:rgb(222,224,228)"></i><i style="left:20.5px;top:6.2px;width:7.1px;height:6.5px;background:rgb(218,218,222)"></i></div>
<div class="mz" style="left:837.0px;top:114.7px;width:34.0px;height:12.4px"><i style="left:0.0px;top:0.0px;width:7.1px;height:6.5px;background:rgb(232,232,236)"></i><i style="left:6.8px;top:0.0px;width:7.1px;height:6.5px;background:rgb(220,222,226)"></i><i style="left:13.6px;top:0.0px;width:7.1px;height:6.5px;background:rgb(208,210,214)"></i><i style="left:20.4px;top:0.0px;width:7.1px;height:6.5px;background:rgb(216,216,220)"></i><i style="left:27.2px;top:0.0px;width:7.1px;height:6.5px;background:rgb(226,228,232)"></i><i style="left:0.0px;top:6.2px;width:7.1px;height:6.5px;background:rgb(232,230,228)"></i><i style="left:6.8px;top:6.2px;width:7.1px;height:6.5px;background:rgb(224,226,230)"></i><i style="left:13.6px;top:6.2px;width:7.1px;height:6.5px;background:rgb(222,220,218)"></i><i style="left:20.4px;top:6.2px;width:7.1px;height:6.5px;background:rgb(216,214,212)"></i><i style="left:27.2px;top:6.2px;width:7.1px;height:6.5px;background:rgb(214,214,218)"></i></div>
<div class="mz" style="left:891.0px;top:114.7px;width:20.0px;height:12.4px"><i style="left:0.0px;top:0.0px;width:7.0px;height:6.5px;background:rgb(228,228,228)"></i><i style="left:6.7px;top:0.0px;width:7.0px;height:6.5px;background:rgb(218,218,222)"></i><i style="left:13.3px;top:0.0px;width:7.0px;height:6.5px;background:rgb(220,220,224)"></i><i style="left:0.0px;top:6.2px;width:7.0px;height:6.5px;background:rgb(228,230,234)"></i><i style="left:6.7px;top:6.2px;width:7.0px;height:6.5px;background:rgb(226,224,222)"></i><i style="left:13.3px;top:6.2px;width:7.0px;height:6.5px;background:rgb(228,228,228)"></i></div>
<div class="mz" style="left:972.6px;top:114.7px;width:19.6px;height:12.4px"><i style="left:0.0px;top:0.0px;width:6.8px;height:6.5px;background:rgb(228,230,234)"></i><i style="left:6.5px;top:0.0px;width:6.8px;height:6.5px;background:rgb(216,214,212)"></i><i style="left:13.1px;top:0.0px;width:6.8px;height:6.5px;background:rgb(224,224,228)"></i><i style="left:0.0px;top:6.2px;width:6.8px;height:6.5px;background:rgb(230,230,230)"></i><i style="left:6.5px;top:6.2px;width:6.8px;height:6.5px;background:rgb(218,220,224)"></i><i style="left:13.1px;top:6.2px;width:6.8px;height:6.5px;background:rgb(220,222,226)"></i></div>
<div class="mz" style="left:999.0px;top:114.7px;width:31.4px;height:12.4px"><i style="left:0.0px;top:0.0px;width:6.6px;height:6.5px;background:rgb(218,220,224)"></i><i style="left:6.3px;top:0.0px;width:6.6px;height:6.5px;background:rgb(208,208,208)"></i><i style="left:12.6px;top:0.0px;width:6.6px;height:6.5px;background:rgb(226,228,232)"></i><i style="left:18.8px;top:0.0px;width:6.6px;height:6.5px;background:rgb(212,212,216)"></i><i style="left:25.1px;top:0.0px;width:6.6px;height:6.5px;background:rgb(216,216,220)"></i><i style="left:0.0px;top:6.2px;width:6.6px;height:6.5px;background:rgb(240,240,244)"></i><i style="left:6.3px;top:6.2px;width:6.6px;height:6.5px;background:rgb(224,222,220)"></i><i style="left:12.6px;top:6.2px;width:6.6px;height:6.5px;background:rgb(218,218,218)"></i><i style="left:18.8px;top:6.2px;width:6.6px;height:6.5px;background:rgb(218,218,218)"></i><i style="left:25.1px;top:6.2px;width:6.6px;height:6.5px;background:rgb(224,224,224)"></i></div>
<div class="tdl" style="left:1029.8px;top:120.9px">付</div>
<div class="abs" style="left:1052.500px;top:112.9px;width:14.0px;height:16px;overflow:hidden"><div class="tdl" style="left:0;top:8px">京东</div></div>
<div class="abs" style="left:431px;top:140.2px;width:8px;height:8px;border:1px solid #5596e3"></div>
<div class="td" style="left:494.5px;top:144.5px;color:#5a5a5a">2</div>
<div class="td" style="left:529px;top:144.5px">存在</div>
<div class="td" style="left:690.8px;top:144.5px">已完成</div>
<div class="mz" style="left:565.0px;top:141.8px;width:27.0px;height:6.6px"><i style="left:0.0px;top:0.0px;width:7.0px;height:6.9px;background:rgb(208,206,204)"></i><i style="left:6.8px;top:0.0px;width:7.0px;height:6.9px;background:rgb(208,208,208)"></i><i style="left:13.5px;top:0.0px;width:7.0px;height:6.9px;background:rgb(196,196,200)"></i><i style="left:20.2px;top:0.0px;width:7.0px;height:6.9px;background:rgb(208,210,214)"></i></div>
<div class="mz" style="left:607.5px;top:141.8px;width:50.5px;height:6.6px"><i style="left:0.0px;top:0.0px;width:6.6px;height:6.9px;background:rgb(212,210,208)"></i><i style="left:6.3px;top:0.0px;width:6.6px;height:6.9px;background:rgb(212,212,212)"></i><i style="left:12.6px;top:0.0px;width:6.6px;height:6.9px;background:rgb(212,214,218)"></i><i style="left:18.9px;top:0.0px;width:6.6px;height:6.9px;background:rgb(196,196,196)"></i><i style="left:25.2px;top:0.0px;width:6.6px;height:6.9px;background:rgb(188,190,194)"></i><i style="left:31.6px;top:0.0px;width:6.6px;height:6.9px;background:rgb(188,190,194)"></i><i style="left:37.9px;top:0.0px;width:6.6px;height:6.9px;background:rgb(208,208,208)"></i><i style="left:44.2px;top:0.0px;width:6.6px;height:6.9px;background:rgb(200,200,200)"></i></div>
<div class="tdl" style="left:721px;top:144.5px;color:#777">2</div>
<div class="mz" style="left:726.2px;top:141.8px;width:49.6px;height:6.6px"><i style="left:0.0px;top:0.0px;width:6.5px;height:6.9px;background:rgb(224,222,220)"></i><i style="left:6.2px;top:0.0px;width:6.5px;height:6.9px;background:rgb(188,188,192)"></i><i style="left:12.4px;top:0.0px;width:6.5px;height:6.9px;background:rgb(220,220,220)"></i><i style="left:18.6px;top:0.0px;width:6.5px;height:6.9px;background:rgb(204,204,204)"></i><i style="left:24.8px;top:0.0px;width:6.5px;height:6.9px;background:rgb(212,212,216)"></i><i style="left:31.0px;top:0.0px;width:6.5px;height:6.9px;background:rgb(220,220,220)"></i><i style="left:37.2px;top:0.0px;width:6.5px;height:6.9px;background:rgb(250,248,246)"></i><i style="left:43.4px;top:0.0px;width:6.5px;height:6.9px;background:rgb(234,232,230)"></i></div>
<div class="mz" style="left:789.7px;top:141.8px;width:27.3px;height:6.6px"><i style="left:0.0px;top:0.0px;width:7.1px;height:6.9px;background:rgb(232,230,228)"></i><i style="left:6.8px;top:0.0px;width:7.1px;height:6.9px;background:rgb(202,200,198)"></i><i style="left:13.6px;top:0.0px;width:7.1px;height:6.9px;background:rgb(204,204,204)"></i><i style="left:20.5px;top:0.0px;width:7.1px;height:6.9px;background:rgb(220,220,220)"></i></div>
<div class="mz" style="left:837.0px;top:141.8px;width:34.0px;height:6.6px"><i style="left:0.0px;top:0.0px;width:7.1px;height:6.9px;background:rgb(222,222,226)"></i><i style="left:6.8px;top:0.0px;width:7.1px;height:6.9px;background:rgb(208,208,212)"></i><i style="left:13.6px;top:0.0px;width:7.1px;height:6.9px;background:rgb(204,206,210)"></i><i style="left:20.4px;top:0.0px;width:7.1px;height:6.9px;background:rgb(204,204,208)"></i><i style="left:27.2px;top:0.0px;width:7.1px;height:6.9px;background:rgb(220,222,226)"></i></div>
<div class="mz" style="left:891.0px;top:141.8px;width:20.0px;height:6.6px"><i style="left:0.0px;top:0.0px;width:7.0px;height:6.9px;background:rgb(222,222,222)"></i><i style="left:6.7px;top:0.0px;width:7.0px;height:6.9px;background:rgb(178,176,174)"></i><i style="left:13.3px;top:0.0px;width:7.0px;height:6.9px;background:rgb(190,188,186)"></i></div>
<div class="mz" style="left:972.6px;top:141.8px;width:19.6px;height:6.6px"><i style="left:0.0px;top:0.0px;width:6.8px;height:6.9px;background:rgb(214,214,214)"></i><i style="left:6.5px;top:0.0px;width:6.8px;height:6.9px;background:rgb(212,214,218)"></i><i style="left:13.1px;top:0.0px;width:6.8px;height:6.9px;background:rgb(214,212,210)"></i></div>
<div class="mz" style="left:999.0px;top:141.8px;width:21.7px;height:6.6px"><i style="left:0.0px;top:0.0px;width:7.5px;height:6.9px;background:rgb(206,206,210)"></i><i style="left:7.2px;top:0.0px;width:7.5px;height:6.9px;background:rgb(196,196,200)"></i><i style="left:14.5px;top:0.0px;width:7.5px;height:6.9px;background:rgb(188,188,192)"></i></div>
<div class="tdl" style="left:1020.8px;top:144.5px">支付</div>
<div class="abs" style="left:1052.500px;top:136.5px;width:14.0px;height:16px;overflow:hidden"><div class="tdl" style="left:0;top:8px">京东</div></div>
<div class="abs" style="left:425px;top:156.06px;width:641.5px;height:23.63px;background:#f1f1f1"></div>
<div class="abs" style="left:482.0px;top:156.06px;width:1px;height:23.63px;background:#fafafa"></div>
<div class="abs" style="left:508.6px;top:156.06px;width:1px;height:23.63px;background:#fafafa"></div>
<div class="abs" style="left:549.0px;top:156.06px;width:1px;height:23.63px;background:#fafafa"></div>
<div class="abs" style="left:606.4px;top:156.06px;width:1px;height:23.63px;background:#fafafa"></div>
<div class="abs" style="left:662.3px;top:156.06px;width:1px;height:23.63px;background:#fafafa"></div>
<div class="abs" style="left:717.9px;top:156.06px;width:1px;height:23.63px;background:#fafafa"></div>
<div class="abs" style="left:774.6px;top:156.06px;width:1px;height:23.63px;background:#fafafa"></div>
<div class="abs" style="left:831.3px;top:156.06px;width:1px;height:23.63px;background:#fafafa"></div>
<div class="abs" style="left:877.6px;top:156.06px;width:1px;height:23.63px;background:#fafafa"></div>
<div class="abs" style="left:923.6px;top:156.06px;width:1px;height:23.63px;background:#fafafa"></div>
<div class="abs" style="left:962.6px;top:156.06px;width:1px;height:23.63px;background:#fafafa"></div>
<div class="abs" style="left:998.2px;top:156.06px;width:1px;height:23.63px;background:#fafafa"></div>
<div class="abs" style="left:1042.3px;top:156.06px;width:1px;height:23.63px;background:#fafafa"></div>
<div class="abs" style="left:431px;top:163.9px;width:8px;height:8px;border:1px solid #5596e3"></div>
<div class="td" style="left:494.5px;top:168.2px;color:#5a5a5a">3</div>
<div class="td" style="left:529px;top:168.2px">存在</div>
<div class="td" style="left:690.8px;top:168.2px">已完成</div>
<div class="tdl" style="left:554.5px;top:168.2px">秋</div>
<div class="mz" style="left:561.0px;top:162.0px;width:37.0px;height:12.4px"><i style="left:0.0px;top:0.0px;width:6.5px;height:6.5px;background:rgb(234,234,238)"></i><i style="left:6.2px;top:0.0px;width:6.5px;height:6.5px;background:rgb(226,226,226)"></i><i style="left:12.3px;top:0.0px;width:6.5px;height:6.5px;background:rgb(212,214,218)"></i><i style="left:18.5px;top:0.0px;width:6.5px;height:6.5px;background:rgb(224,224,224)"></i><i style="left:24.7px;top:0.0px;width:6.5px;height:6.5px;background:rgb(216,218,222)"></i><i style="left:30.8px;top:0.0px;width:6.5px;height:6.5px;background:rgb(220,222,226)"></i><i style="left:0.0px;top:6.2px;width:6.5px;height:6.5px;background:rgb(234,236,240)"></i><i style="left:6.2px;top:6.2px;width:6.5px;height:6.5px;background:rgb(230,230,230)"></i><i style="left:12.3px;top:6.2px;width:6.5px;height:6.5px;background:rgb(214,216,220)"></i><i style="left:18.5px;top:6.2px;width:6.5px;height:6.5px;background:rgb(214,214,214)"></i><i style="left:24.7px;top:6.2px;width:6.5px;height:6.5px;background:rgb(224,224,228)"></i><i style="left:30.8px;top:6.2px;width:6.5px;height:6.5px;background:rgb(224,224,224)"></i></div>
<div class="mz" style="left:607.5px;top:162.0px;width:35.0px;height:12.4px"><i style="left:0.0px;top:0.0px;width:7.3px;height:6.5px;background:rgb(228,228,228)"></i><i style="left:7.0px;top:0.0px;width:7.3px;height:6.5px;background:rgb(226,226,230)"></i><i style="left:14.0px;top:0.0px;width:7.3px;height:6.5px;background:rgb(228,226,224)"></i><i style="left:21.0px;top:0.0px;width:7.3px;height:6.5px;background:rgb(218,218,218)"></i><i style="left:28.0px;top:0.0px;width:7.3px;height:6.5px;background:rgb(214,214,218)"></i><i style="left:0.0px;top:6.2px;width:7.3px;height:6.5px;background:rgb(228,228,228)"></i><i style="left:7.0px;top:6.2px;width:7.3px;height:6.5px;background:rgb(222,222,222)"></i><i style="left:14.0px;top:6.2px;width:7.3px;height:6.5px;background:rgb(224,226,230)"></i><i style="left:21.0px;top:6.2px;width:7.3px;height:6.5px;background:rgb(226,226,230)"></i><i style="left:28.0px;top:6.2px;width:7.3px;height:6.5px;background:rgb(220,218,216)"></i></div>
<div class="tdl" style="left:643.0px;top:168.2px">26...</div>
<div class="mz" style="left:721.7px;top:162.0px;width:54.1px;height:12.4px"><i style="left:0.0px;top:0.0px;width:7.1px;height:6.5px;background:rgb(232,230,228)"></i><i style="left:6.8px;top:0.0px;width:7.1px;height:6.5px;background:rgb(214,214,218)"></i><i style="left:13.5px;top:0.0px;width:7.1px;height:6.5px;background:rgb(226,224,222)"></i><i style="left:20.3px;top:0.0px;width:7.1px;height:6.5px;background:rgb(214,216,220)"></i><i style="left:27.0px;top:0.0px;width:7.1px;height:6.5px;background:rgb(218,218,218)"></i><i style="left:33.8px;top:0.0px;width:7.1px;height:6.5px;background:rgb(224,226,230)"></i><i style="left:40.6px;top:0.0px;width:7.1px;height:6.5px;background:rgb(244,246,250)"></i><i style="left:47.3px;top:0.0px;width:7.1px;height:6.5px;background:rgb(248,248,252)"></i><i style="left:0.0px;top:6.2px;width:7.1px;height:6.5px;background:rgb(230,230,234)"></i><i style="left:6.8px;top:6.2px;width:7.1px;height:6.5px;background:rgb(220,220,220)"></i><i style="left:13.5px;top:6.2px;width:7.1px;height:6.5px;background:rgb(218,220,224)"></i><i style="left:20.3px;top:6.2px;width:7.1px;height:6.5px;background:rgb(224,224,224)"></i><i style="left:27.0px;top:6.2px;width:7.1px;height:6.5px;background:rgb(218,218,222)"></i><i style="left:33.8px;top:6.2px;width:7.1px;height:6.5px;background:rgb(224,224,228)"></i><i style="left:40.6px;top:6.2px;width:7.1px;height:6.5px;background:rgb(248,248,248)"></i><i style="left:47.3px;top:6.2px;width:7.1px;height:6.5px;background:rgb(248,248,248)"></i></div>
<div class="mz" style="left:789.7px;top:162.0px;width:27.3px;height:12.4px"><i style="left:0.0px;top:0.0px;width:7.1px;height:6.5px;background:rgb(224,222,220)"></i><i style="left:6.8px;top:0.0px;width:7.1px;height:6.5px;background:rgb(214,214,214)"></i><i style="left:13.6px;top:0.0px;width:7.1px;height:6.5px;background:rgb(214,216,220)"></i><i style="left:20.5px;top:0.0px;width:7.1px;height:6.5px;background:rgb(216,216,216)"></i><i style="left:0.0px;top:6.2px;width:7.1px;height:6.5px;background:rgb(228,228,232)"></i><i style="left:6.8px;top:6.2px;width:7.1px;height:6.5px;background:rgb(228,226,224)"></i><i style="left:13.6px;top:6.2px;width:7.1px;height:6.5px;background:rgb(218,218,218)"></i><i style="left:20.5px;top:6.2px;width:7.1px;height:6.5px;background:rgb(220,222,226)"></i></div>
<div class="mz" style="left:843.8px;top:162.0px;width:20.2px;height:12.4px"><i style="left:0.0px;top:0.0px;width:7.0px;height:6.5px;background:rgb(224,224,224)"></i><i style="left:6.7px;top:0.0px;width:7.0px;height:6.5px;background:rgb(216,218,222)"></i><i style="left:13.5px;top:0.0px;width:7.0px;height:6.5px;background:rgb(224,224,224)"></i><i style="left:0.0px;top:6.2px;width:7.0px;height:6.5px;background:rgb(230,230,230)"></i><i style="left:6.7px;top:6.2px;width:7.0px;height:6.5px;background:rgb(220,220,224)"></i><i style="left:13.5px;top:6.2px;width:7.0px;height:6.5px;background:rgb(228,230,234)"></i></div>
<div class="mz" style="left:891.0px;top:162.0px;width:16.0px;height:12.4px"><i style="left:0.0px;top:0.0px;width:8.3px;height:6.5px;background:rgb(224,224,224)"></i><i style="left:8.0px;top:0.0px;width:8.3px;height:6.5px;background:rgb(226,226,226)"></i><i style="left:0.0px;top:6.2px;width:8.3px;height:6.5px;background:rgb(236,236,236)"></i><i style="left:8.0px;top:6.2px;width:8.3px;height:6.5px;background:rgb(228,228,228)"></i></div>
<div class="tdl" style="left:907px;top:168.2px">)</div>
<div class="mz" style="left:972.6px;top:162.0px;width:19.6px;height:12.4px"><i style="left:0.0px;top:0.0px;width:6.8px;height:6.5px;background:rgb(230,232,236)"></i><i style="left:6.5px;top:0.0px;width:6.8px;height:6.5px;background:rgb(218,220,224)"></i><i style="left:13.1px;top:0.0px;width:6.8px;height:6.5px;background:rgb(216,218,222)"></i><i style="left:0.0px;top:6.2px;width:6.8px;height:6.5px;background:rgb(242,240,238)"></i><i style="left:6.5px;top:6.2px;width:6.8px;height:6.5px;background:rgb(222,222,226)"></i><i style="left:13.1px;top:6.2px;width:6.8px;height:6.5px;background:rgb(214,214,214)"></i></div>
<div class="mz" style="left:999.0px;top:162.0px;width:26.2px;height:12.4px"><i style="left:0.0px;top:0.0px;width:6.9px;height:6.5px;background:rgb(232,230,228)"></i><i style="left:6.6px;top:0.0px;width:6.9px;height:6.5px;background:rgb(216,216,220)"></i><i style="left:13.1px;top:0.0px;width:6.9px;height:6.5px;background:rgb(224,224,228)"></i><i style="left:19.7px;top:0.0px;width:6.9px;height:6.5px;background:rgb(222,222,226)"></i><i style="left:0.0px;top:6.2px;width:6.9px;height:6.5px;background:rgb(240,240,244)"></i><i style="left:6.6px;top:6.2px;width:6.9px;height:6.5px;background:rgb(222,224,228)"></i><i style="left:13.1px;top:6.2px;width:6.9px;height:6.5px;background:rgb(232,232,236)"></i><i style="left:19.7px;top:6.2px;width:6.9px;height:6.5px;background:rgb(226,226,230)"></i></div>
<div class="tdl" style="left:1020.8px;top:168.2px">支付</div>
<div class="mz" style="left:1019.0px;top:162.0px;width:6.2px;height:12.4px"><i style="left:0.0px;top:0.0px;width:6.5px;height:6.5px;background:rgb(218,218,218)"></i><i style="left:0.0px;top:6.2px;width:6.5px;height:6.5px;background:rgb(226,224,222)"></i></div>
<div class="abs" style="left:1052.500px;top:160.2px;width:14.0px;height:16px;overflow:hidden"><div class="tdl" style="left:0;top:8px">京东</div></div>
<div class="abs" style="left:431px;top:187.5px;width:8px;height:8px;border:1px solid #5596e3"></div>
<div class="td" style="left:494.5px;top:191.8px;color:#5a5a5a">4</div>
<div class="td" style="left:529px;top:191.8px">存在</div>
<div class="td" style="left:690.8px;top:191.8px">已完成</div>
<div class="tdl" style="left:554.5px;top:191.8px">新</div>
<div class="mz" style="left:561.0px;top:189.1px;width:39.0px;height:6.6px"><i style="left:0.0px;top:0.0px;width:6.8px;height:6.9px;background:rgb(226,226,230)"></i><i style="left:6.5px;top:0.0px;width:6.8px;height:6.9px;background:rgb(214,212,210)"></i><i style="left:13.0px;top:0.0px;width:6.8px;height:6.9px;background:rgb(198,196,194)"></i><i style="left:19.5px;top:0.0px;width:6.8px;height:6.9px;background:rgb(178,176,174)"></i><i style="left:26.0px;top:0.0px;width:6.8px;height:6.9px;background:rgb(220,222,226)"></i><i style="left:32.5px;top:0.0px;width:6.8px;height:6.9px;background:rgb(188,188,188)"></i></div>
<div class="mz" style="left:607.5px;top:189.1px;width:41.5px;height:6.6px"><i style="left:0.0px;top:0.0px;width:7.2px;height:6.9px;background:rgb(228,226,224)"></i><i style="left:6.9px;top:0.0px;width:7.2px;height:6.9px;background:rgb(220,220,220)"></i><i style="left:13.8px;top:0.0px;width:7.2px;height:6.9px;background:rgb(208,208,208)"></i><i style="left:20.8px;top:0.0px;width:7.2px;height:6.9px;background:rgb(196,196,196)"></i><i style="left:27.7px;top:0.0px;width:7.2px;height:6.9px;background:rgb(204,204,204)"></i><i style="left:34.6px;top:0.0px;width:7.2px;height:6.9px;background:rgb(198,196,194)"></i></div>
<div class="tdl" style="left:649.5px;top:191.8px">...</div>
<div class="mz" style="left:721.7px;top:189.1px;width:54.1px;height:6.6px"><i style="left:0.0px;top:0.0px;width:7.1px;height:6.9px;background:rgb(218,218,218)"></i><i style="left:6.8px;top:0.0px;width:7.1px;height:6.9px;background:rgb(202,200,198)"></i><i style="left:13.5px;top:0.0px;width:7.1px;height:6.9px;background:rgb(200,202,206)"></i><i style="left:20.3px;top:0.0px;width:7.1px;height:6.9px;background:rgb(208,210,214)"></i><i style="left:27.0px;top:0.0px;width:7.1px;height:6.9px;background:rgb(200,200,200)"></i><i style="left:33.8px;top:0.0px;width:7.1px;height:6.9px;background:rgb(220,220,220)"></i><i style="left:40.6px;top:0.0px;width:7.1px;height:6.9px;background:rgb(220,218,216)"></i><i style="left:47.3px;top:0.0px;width:7.1px;height:6.9px;background:rgb(234,232,230)"></i></div>
<div class="mz" style="left:789.7px;top:189.1px;width:27.3px;height:6.6px"><i style="left:0.0px;top:0.0px;width:7.1px;height:6.9px;background:rgb(186,186,190)"></i><i style="left:6.8px;top:0.0px;width:7.1px;height:6.9px;background:rgb(216,216,216)"></i><i style="left:13.6px;top:0.0px;width:7.1px;height:6.9px;background:rgb(208,208,208)"></i><i style="left:20.5px;top:0.0px;width:7.1px;height:6.9px;background:rgb(198,196,194)"></i></div>
<div class="mz" style="left:843.8px;top:189.1px;width:27.2px;height:6.6px"><i style="left:0.0px;top:0.0px;width:7.1px;height:6.9px;background:rgb(206,206,206)"></i><i style="left:6.8px;top:0.0px;width:7.1px;height:6.9px;background:rgb(204,204,204)"></i><i style="left:13.6px;top:0.0px;width:7.1px;height:6.9px;background:rgb(208,208,208)"></i><i style="left:20.4px;top:0.0px;width:7.1px;height:6.9px;background:rgb(218,218,218)"></i></div>
<div class="mz" style="left:891.0px;top:189.1px;width:20.0px;height:6.6px"><i style="left:0.0px;top:0.0px;width:7.0px;height:6.9px;background:rgb(222,222,222)"></i><i style="left:6.7px;top:0.0px;width:7.0px;height:6.9px;background:rgb(218,216,214)"></i><i style="left:13.3px;top:0.0px;width:7.0px;height:6.9px;background:rgb(208,208,212)"></i></div>
<div class="td" style="left:1020.3px;top:191.8px">在线支付</div>
<div class="abs" style="left:425px;top:203.32px;width:641.5px;height:23.63px;background:#f1f1f1"></div>
<div class="abs" style="left:482.0px;top:203.32px;width:1px;height:23.63px;background:#fafafa"></div>
<div class="abs" style="left:508.6px;top:203.32px;width:1px;height:23.63px;background:#fafafa"></div>
<div class="abs" style="left:549.0px;top:203.32px;width:1px;height:23.63px;background:#fafafa"></div>
<div class="abs" style="left:606.4px;top:203.32px;width:1px;height:23.63px;background:#fafafa"></div>
<div class="abs" style="left:662.3px;top:203.32px;width:1px;height:23.63px;background:#fafafa"></div>
<div class="abs" style="left:717.9px;top:203.32px;width:1px;height:23.63px;background:#fafafa"></div>
<div class="abs" style="left:774.6px;top:203.32px;width:1px;height:23.63px;background:#fafafa"></div>
<div class="abs" style="left:831.3px;top:203.32px;width:1px;height:23.63px;background:#fafafa"></div>
<div class="abs" style="left:877.6px;top:203.32px;width:1px;height:23.63px;background:#fafafa"></div>
<div class="abs" style="left:923.6px;top:203.32px;width:1px;height:23.63px;background:#fafafa"></div>
<div class="abs" style="left:962.6px;top:203.32px;width:1px;height:23.63px;background:#fafafa"></div>
<div class="abs" style="left:998.2px;top:203.32px;width:1px;height:23.63px;background:#fafafa"></div>
<div class="abs" style="left:1042.3px;top:203.32px;width:1px;height:23.63px;background:#fafafa"></div>
<div class="abs" style="left:431px;top:211.1px;width:8px;height:8px;border:1px solid #5596e3"></div>
<div class="td" style="left:494.5px;top:215.4px;color:#5a5a5a">5</div>
<div class="td" style="left:529px;top:215.4px">存在</div>
<div class="td" style="left:690.8px;top:215.4px">已完成</div>
<div class="mz" style="left:552.5px;top:209.2px;width:48.5px;height:12.4px"><i style="left:0.0px;top:0.0px;width:7.2px;height:6.5px;background:rgb(222,222,222)"></i><i style="left:6.9px;top:0.0px;width:7.2px;height:6.5px;background:rgb(220,220,220)"></i><i style="left:13.9px;top:0.0px;width:7.2px;height:6.5px;background:rgb(220,218,216)"></i><i style="left:20.8px;top:0.0px;width:7.2px;height:6.5px;background:rgb(212,212,216)"></i><i style="left:27.7px;top:0.0px;width:7.2px;height:6.5px;background:rgb(222,220,218)"></i><i style="left:34.6px;top:0.0px;width:7.2px;height:6.5px;background:rgb(222,222,222)"></i><i style="left:41.6px;top:0.0px;width:7.2px;height:6.5px;background:rgb(222,220,218)"></i><i style="left:0.0px;top:6.2px;width:7.2px;height:6.5px;background:rgb(240,240,240)"></i><i style="left:6.9px;top:6.2px;width:7.2px;height:6.5px;background:rgb(226,224,222)"></i><i style="left:13.9px;top:6.2px;width:7.2px;height:6.5px;background:rgb(230,230,230)"></i><i style="left:20.8px;top:6.2px;width:7.2px;height:6.5px;background:rgb(228,228,228)"></i><i style="left:27.7px;top:6.2px;width:7.2px;height:6.5px;background:rgb(218,218,218)"></i><i style="left:34.6px;top:6.2px;width:7.2px;height:6.5px;background:rgb(220,220,220)"></i><i style="left:41.6px;top:6.2px;width:7.2px;height:6.5px;background:rgb(226,226,226)"></i></div>
<div class="mz" style="left:607.5px;top:209.2px;width:47.5px;height:12.4px"><i style="left:0.0px;top:0.0px;width:7.1px;height:6.5px;background:rgb(236,236,240)"></i><i style="left:6.8px;top:0.0px;width:7.1px;height:6.5px;background:rgb(226,226,226)"></i><i style="left:13.6px;top:0.0px;width:7.1px;height:6.5px;background:rgb(208,210,214)"></i><i style="left:20.4px;top:0.0px;width:7.1px;height:6.5px;background:rgb(214,216,220)"></i><i style="left:27.1px;top:0.0px;width:7.1px;height:6.5px;background:rgb(216,214,212)"></i><i style="left:33.9px;top:0.0px;width:7.1px;height:6.5px;background:rgb(220,220,224)"></i><i style="left:40.7px;top:0.0px;width:7.1px;height:6.5px;background:rgb(224,224,228)"></i><i style="left:0.0px;top:6.2px;width:7.1px;height:6.5px;background:rgb(234,236,240)"></i><i style="left:6.8px;top:6.2px;width:7.1px;height:6.5px;background:rgb(230,230,230)"></i><i style="left:13.6px;top:6.2px;width:7.1px;height:6.5px;background:rgb(224,224,224)"></i><i style="left:20.4px;top:6.2px;width:7.1px;height:6.5px;background:rgb(224,222,220)"></i><i style="left:27.1px;top:6.2px;width:7.1px;height:6.5px;background:rgb(214,214,218)"></i><i style="left:33.9px;top:6.2px;width:7.1px;height:6.5px;background:rgb(218,218,218)"></i><i style="left:40.7px;top:6.2px;width:7.1px;height:6.5px;background:rgb(214,214,214)"></i></div>
<div class="tdl" style="left:655.5px;top:215.4px">.</div>
<div class="tdl" style="left:721px;top:215.4px;color:#777">2</div>
<div class="mz" style="left:726.2px;top:209.2px;width:49.6px;height:12.4px"><i style="left:0.0px;top:0.0px;width:6.5px;height:6.5px;background:rgb(232,232,232)"></i><i style="left:6.2px;top:0.0px;width:6.5px;height:6.5px;background:rgb(222,220,218)"></i><i style="left:12.4px;top:0.0px;width:6.5px;height:6.5px;background:rgb(212,214,218)"></i><i style="left:18.6px;top:0.0px;width:6.5px;height:6.5px;background:rgb(218,218,222)"></i><i style="left:24.8px;top:0.0px;width:6.5px;height:6.5px;background:rgb(222,224,228)"></i><i style="left:31.0px;top:0.0px;width:6.5px;height:6.5px;background:rgb(214,212,210)"></i><i style="left:37.2px;top:0.0px;width:6.5px;height:6.5px;background:rgb(250,248,246)"></i><i style="left:43.4px;top:0.0px;width:6.5px;height:6.5px;background:rgb(250,248,246)"></i><i style="left:0.0px;top:6.2px;width:6.5px;height:6.5px;background:rgb(236,236,236)"></i><i style="left:6.2px;top:6.2px;width:6.5px;height:6.5px;background:rgb(228,228,232)"></i><i style="left:12.4px;top:6.2px;width:6.5px;height:6.5px;background:rgb(230,230,234)"></i><i style="left:18.6px;top:6.2px;width:6.5px;height:6.5px;background:rgb(220,218,216)"></i><i style="left:24.8px;top:6.2px;width:6.5px;height:6.5px;background:rgb(214,214,214)"></i><i style="left:31.0px;top:6.2px;width:6.5px;height:6.5px;background:rgb(234,232,230)"></i><i style="left:37.2px;top:6.2px;width:6.5px;height:6.5px;background:rgb(248,248,252)"></i><i style="left:43.4px;top:6.2px;width:6.5px;height:6.5px;background:rgb(248,248,248)"></i></div>
<div class="mz" style="left:789.7px;top:209.2px;width:27.3px;height:12.4px"><i style="left:0.0px;top:0.0px;width:7.1px;height:6.5px;background:rgb(222,222,222)"></i><i style="left:6.8px;top:0.0px;width:7.1px;height:6.5px;background:rgb(222,222,222)"></i><i style="left:13.6px;top:0.0px;width:7.1px;height:6.5px;background:rgb(218,220,224)"></i><i style="left:20.5px;top:0.0px;width:7.1px;height:6.5px;background:rgb(212,214,218)"></i><i style="left:0.0px;top:6.2px;width:7.1px;height:6.5px;background:rgb(230,228,226)"></i><i style="left:6.8px;top:6.2px;width:7.1px;height:6.5px;background:rgb(228,228,232)"></i><i style="left:13.6px;top:6.2px;width:7.1px;height:6.5px;background:rgb(222,222,222)"></i><i style="left:20.5px;top:6.2px;width:7.1px;height:6.5px;background:rgb(220,220,224)"></i></div>
<div class="mz" style="left:843.8px;top:209.2px;width:27.2px;height:12.4px"><i style="left:0.0px;top:0.0px;width:7.1px;height:6.5px;background:rgb(220,218,216)"></i><i style="left:6.8px;top:0.0px;width:7.1px;height:6.5px;background:rgb(226,226,230)"></i><i style="left:13.6px;top:0.0px;width:7.1px;height:6.5px;background:rgb(222,222,222)"></i><i style="left:20.4px;top:0.0px;width:7.1px;height:6.5px;background:rgb(248,248,248)"></i><i style="left:0.0px;top:6.2px;width:7.1px;height:6.5px;background:rgb(230,232,236)"></i><i style="left:6.8px;top:6.2px;width:7.1px;height:6.5px;background:rgb(220,220,224)"></i><i style="left:13.6px;top:6.2px;width:7.1px;height:6.5px;background:rgb(220,220,220)"></i><i style="left:20.4px;top:6.2px;width:7.1px;height:6.5px;background:rgb(248,248,248)"></i></div>
<div class="mz" style="left:891.0px;top:209.2px;width:16.0px;height:12.4px"><i style="left:0.0px;top:0.0px;width:8.3px;height:6.5px;background:rgb(230,230,230)"></i><i style="left:8.0px;top:0.0px;width:8.3px;height:6.5px;background:rgb(212,212,212)"></i><i style="left:0.0px;top:6.2px;width:8.3px;height:6.5px;background:rgb(236,234,232)"></i><i style="left:8.0px;top:6.2px;width:8.3px;height:6.5px;background:rgb(222,224,228)"></i></div>
<div class="tdl" style="left:907px;top:215.4px">)</div>
<div class="td" style="left:1020.3px;top:215.4px">在线支付</div>
<div class="abs" style="left:431px;top:234.8px;width:8px;height:8px;border:1px solid #5596e3"></div>
<div class="td" style="left:494.5px;top:239.1px;color:#5a5a5a">6</div>
<div class="td" style="left:529px;top:239.1px">存在</div>
<div class="td" style="left:690.8px;top:239.1px">已完成</div>
<div class="tdl" style="left:549.5px;top:239.1px">新</div>
<div class="mz" style="left:556.0px;top:236.4px;width:44.0px;height:6.6px"><i style="left:0.0px;top:0.0px;width:6.6px;height:6.9px;background:rgb(198,198,198)"></i><i style="left:6.3px;top:0.0px;width:6.6px;height:6.9px;background:rgb(176,176,176)"></i><i style="left:12.6px;top:0.0px;width:6.6px;height:6.9px;background:rgb(220,220,224)"></i><i style="left:18.9px;top:0.0px;width:6.6px;height:6.9px;background:rgb(190,188,186)"></i><i style="left:25.1px;top:0.0px;width:6.6px;height:6.9px;background:rgb(176,178,182)"></i><i style="left:31.4px;top:0.0px;width:6.6px;height:6.9px;background:rgb(196,196,196)"></i><i style="left:37.7px;top:0.0px;width:6.6px;height:6.9px;background:rgb(220,220,220)"></i></div>
<div class="mz" style="left:607.5px;top:236.4px;width:42.5px;height:6.6px"><i style="left:0.0px;top:0.0px;width:7.4px;height:6.9px;background:rgb(230,230,230)"></i><i style="left:7.1px;top:0.0px;width:7.4px;height:6.9px;background:rgb(190,188,186)"></i><i style="left:14.2px;top:0.0px;width:7.4px;height:6.9px;background:rgb(198,196,194)"></i><i style="left:21.2px;top:0.0px;width:7.4px;height:6.9px;background:rgb(204,204,208)"></i><i style="left:28.3px;top:0.0px;width:7.4px;height:6.9px;background:rgb(204,206,210)"></i><i style="left:35.4px;top:0.0px;width:7.4px;height:6.9px;background:rgb(188,190,194)"></i></div>
<div class="tdl" style="left:650.5px;top:239.1px">...</div>
<div class="tdl" style="left:721px;top:239.1px;color:#777">20</div>
<div class="mz" style="left:730.7px;top:236.4px;width:45.1px;height:6.6px"><i style="left:0.0px;top:0.0px;width:6.7px;height:6.9px;background:rgb(206,208,212)"></i><i style="left:6.4px;top:0.0px;width:6.7px;height:6.9px;background:rgb(208,208,208)"></i><i style="left:12.9px;top:0.0px;width:6.7px;height:6.9px;background:rgb(208,208,212)"></i><i style="left:19.3px;top:0.0px;width:6.7px;height:6.9px;background:rgb(196,196,196)"></i><i style="left:25.8px;top:0.0px;width:6.7px;height:6.9px;background:rgb(202,200,198)"></i><i style="left:32.2px;top:0.0px;width:6.7px;height:6.9px;background:rgb(240,238,236)"></i><i style="left:38.7px;top:0.0px;width:6.7px;height:6.9px;background:rgb(244,244,244)"></i></div>
<div class="mz" style="left:789.7px;top:236.4px;width:27.3px;height:6.6px"><i style="left:0.0px;top:0.0px;width:7.1px;height:6.9px;background:rgb(210,210,210)"></i><i style="left:6.8px;top:0.0px;width:7.1px;height:6.9px;background:rgb(188,188,188)"></i><i style="left:13.6px;top:0.0px;width:7.1px;height:6.9px;background:rgb(190,188,186)"></i><i style="left:20.5px;top:0.0px;width:7.1px;height:6.9px;background:rgb(196,196,200)"></i></div>
<div class="mz" style="left:843.8px;top:236.4px;width:27.2px;height:6.6px"><i style="left:0.0px;top:0.0px;width:7.1px;height:6.9px;background:rgb(200,198,196)"></i><i style="left:6.8px;top:0.0px;width:7.1px;height:6.9px;background:rgb(222,220,218)"></i><i style="left:13.6px;top:0.0px;width:7.1px;height:6.9px;background:rgb(188,190,194)"></i><i style="left:20.4px;top:0.0px;width:7.1px;height:6.9px;background:rgb(218,218,218)"></i></div>
<div class="mz" style="left:891.0px;top:236.4px;width:20.0px;height:6.6px"><i style="left:0.0px;top:0.0px;width:7.0px;height:6.9px;background:rgb(230,230,234)"></i><i style="left:6.7px;top:0.0px;width:7.0px;height:6.9px;background:rgb(208,208,208)"></i><i style="left:13.3px;top:0.0px;width:7.0px;height:6.9px;background:rgb(188,188,188)"></i></div>
<div class="td" style="left:1020.3px;top:239.1px">在线支付</div>
<div class="abs" style="left:425px;top:250.58px;width:641.5px;height:23.63px;background:#f1f1f1"></div>
<div class="abs" style="left:482.0px;top:250.58px;width:1px;height:23.63px;background:#fafafa"></div>
<div class="abs" style="left:508.6px;top:250.58px;width:1px;height:23.63px;background:#fafafa"></div>
<div class="abs" style="left:549.0px;top:250.58px;width:1px;height:23.63px;background:#fafafa"></div>
<div class="abs" style="left:606.4px;top:250.58px;width:1px;height:23.63px;background:#fafafa"></div>
<div class="abs" style="left:662.3px;top:250.58px;width:1px;height:23.63px;background:#fafafa"></div>
<div class="abs" style="left:717.9px;top:250.58px;width:1px;height:23.63px;background:#fafafa"></div>
<div class="abs" style="left:774.6px;top:250.58px;width:1px;height:23.63px;background:#fafafa"></div>
<div class="abs" style="left:831.3px;top:250.58px;width:1px;height:23.63px;background:#fafafa"></div>
<div class="abs" style="left:877.6px;top:250.58px;width:1px;height:23.63px;background:#fafafa"></div>
<div class="abs" style="left:923.6px;top:250.58px;width:1px;height:23.63px;background:#fafafa"></div>
<div class="abs" style="left:962.6px;top:250.58px;width:1px;height:23.63px;background:#fafafa"></div>
<div class="abs" style="left:998.2px;top:250.58px;width:1px;height:23.63px;background:#fafafa"></div>
<div class="abs" style="left:1042.3px;top:250.58px;width:1px;height:23.63px;background:#fafafa"></div>
<div class="abs" style="left:431px;top:258.4px;width:8px;height:8px;border:1px solid #5596e3"></div>
<div class="td" style="left:494.5px;top:262.7px;color:#5a5a5a">7</div>
<div class="td" style="left:529px;top:262.7px">存在</div>
<div class="td" style="left:690.8px;top:262.7px">已完成</div>
<div class="tdl" style="left:557.5px;top:262.7px">新</div>
<div class="mz" style="left:564.0px;top:256.5px;width:35.0px;height:12.4px"><i style="left:0.0px;top:0.0px;width:7.3px;height:6.5px;background:rgb(232,234,238)"></i><i style="left:7.0px;top:0.0px;width:7.3px;height:6.5px;background:rgb(216,216,216)"></i><i style="left:14.0px;top:0.0px;width:7.3px;height:6.5px;background:rgb(228,226,224)"></i><i style="left:21.0px;top:0.0px;width:7.3px;height:6.5px;background:rgb(208,208,212)"></i><i style="left:28.0px;top:0.0px;width:7.3px;height:6.5px;background:rgb(220,220,220)"></i><i style="left:0.0px;top:6.2px;width:7.3px;height:6.5px;background:rgb(232,232,236)"></i><i style="left:7.0px;top:6.2px;width:7.3px;height:6.5px;background:rgb(222,220,218)"></i><i style="left:14.0px;top:6.2px;width:7.3px;height:6.5px;background:rgb(230,230,234)"></i><i style="left:21.0px;top:6.2px;width:7.3px;height:6.5px;background:rgb(222,220,218)"></i><i style="left:28.0px;top:6.2px;width:7.3px;height:6.5px;background:rgb(224,222,220)"></i></div>
<div class="mz" style="left:607.5px;top:256.5px;width:42.5px;height:12.4px"><i style="left:0.0px;top:0.0px;width:7.4px;height:6.5px;background:rgb(230,232,236)"></i><i style="left:7.1px;top:0.0px;width:7.4px;height:6.5px;background:rgb(226,228,232)"></i><i style="left:14.2px;top:0.0px;width:7.4px;height:6.5px;background:rgb(212,212,216)"></i><i style="left:21.2px;top:0.0px;width:7.4px;height:6.5px;background:rgb(212,214,218)"></i><i style="left:28.3px;top:0.0px;width:7.4px;height:6.5px;background:rgb(226,228,232)"></i><i style="left:35.4px;top:0.0px;width:7.4px;height:6.5px;background:rgb(222,222,226)"></i><i style="left:0.0px;top:6.2px;width:7.4px;height:6.5px;background:rgb(226,224,222)"></i><i style="left:7.1px;top:6.2px;width:7.4px;height:6.5px;background:rgb(216,214,212)"></i><i style="left:14.2px;top:6.2px;width:7.4px;height:6.5px;background:rgb(224,222,220)"></i><i style="left:21.2px;top:6.2px;width:7.4px;height:6.5px;background:rgb(220,218,216)"></i><i style="left:28.3px;top:6.2px;width:7.4px;height:6.5px;background:rgb(230,232,236)"></i><i style="left:35.4px;top:6.2px;width:7.4px;height:6.5px;background:rgb(222,222,226)"></i></div>
<div class="tdl" style="left:650.5px;top:262.7px">...</div>
<div class="mz" style="left:721.7px;top:256.5px;width:54.1px;height:12.4px"><i style="left:0.0px;top:0.0px;width:7.1px;height:6.5px;background:rgb(224,222,220)"></i><i style="left:6.8px;top:0.0px;width:7.1px;height:6.5px;background:rgb(224,222,220)"></i><i style="left:13.5px;top:0.0px;width:7.1px;height:6.5px;background:rgb(216,218,222)"></i><i style="left:20.3px;top:0.0px;width:7.1px;height:6.5px;background:rgb(208,208,208)"></i><i style="left:27.0px;top:0.0px;width:7.1px;height:6.5px;background:rgb(218,216,214)"></i><i style="left:33.8px;top:0.0px;width:7.1px;height:6.5px;background:rgb(210,208,206)"></i><i style="left:40.6px;top:0.0px;width:7.1px;height:6.5px;background:rgb(244,242,240)"></i><i style="left:47.3px;top:0.0px;width:7.1px;height:6.5px;background:rgb(248,248,248)"></i><i style="left:0.0px;top:6.2px;width:7.1px;height:6.5px;background:rgb(238,238,242)"></i><i style="left:6.8px;top:6.2px;width:7.1px;height:6.5px;background:rgb(228,226,224)"></i><i style="left:13.5px;top:6.2px;width:7.1px;height:6.5px;background:rgb(214,214,214)"></i><i style="left:20.3px;top:6.2px;width:7.1px;height:6.5px;background:rgb(230,230,234)"></i><i style="left:27.0px;top:6.2px;width:7.1px;height:6.5px;background:rgb(230,232,236)"></i><i style="left:33.8px;top:6.2px;width:7.1px;height:6.5px;background:rgb(218,220,224)"></i><i style="left:40.6px;top:6.2px;width:7.1px;height:6.5px;background:rgb(248,248,248)"></i><i style="left:47.3px;top:6.2px;width:7.1px;height:6.5px;background:rgb(248,248,248)"></i></div>
<div class="mz" style="left:789.7px;top:256.5px;width:27.3px;height:12.4px"><i style="left:0.0px;top:0.0px;width:7.1px;height:6.5px;background:rgb(222,224,228)"></i><i style="left:6.8px;top:0.0px;width:7.1px;height:6.5px;background:rgb(226,226,226)"></i><i style="left:13.6px;top:0.0px;width:7.1px;height:6.5px;background:rgb(220,218,216)"></i><i style="left:20.5px;top:0.0px;width:7.1px;height:6.5px;background:rgb(226,226,226)"></i><i style="left:0.0px;top:6.2px;width:7.1px;height:6.5px;background:rgb(230,230,234)"></i><i style="left:6.8px;top:6.2px;width:7.1px;height:6.5px;background:rgb(224,226,230)"></i><i style="left:13.6px;top:6.2px;width:7.1px;height:6.5px;background:rgb(216,214,212)"></i><i style="left:20.5px;top:6.2px;width:7.1px;height:6.5px;background:rgb(230,228,226)"></i></div>
<div class="mz" style="left:843.8px;top:256.5px;width:27.2px;height:12.4px"><i style="left:0.0px;top:0.0px;width:7.1px;height:6.5px;background:rgb(234,232,230)"></i><i style="left:6.8px;top:0.0px;width:7.1px;height:6.5px;background:rgb(208,208,212)"></i><i style="left:13.6px;top:0.0px;width:7.1px;height:6.5px;background:rgb(222,224,228)"></i><i style="left:20.4px;top:0.0px;width:7.1px;height:6.5px;background:rgb(244,246,250)"></i><i style="left:0.0px;top:6.2px;width:7.1px;height:6.5px;background:rgb(232,232,236)"></i><i style="left:6.8px;top:6.2px;width:7.1px;height:6.5px;background:rgb(224,224,224)"></i><i style="left:13.6px;top:6.2px;width:7.1px;height:6.5px;background:rgb(226,226,226)"></i><i style="left:20.4px;top:6.2px;width:7.1px;height:6.5px;background:rgb(248,248,248)"></i></div>
<div class="mz" style="left:891.0px;top:256.5px;width:20.0px;height:12.4px"><i style="left:0.0px;top:0.0px;width:7.0px;height:6.5px;background:rgb(230,232,236)"></i><i style="left:6.7px;top:0.0px;width:7.0px;height:6.5px;background:rgb(224,226,230)"></i><i style="left:13.3px;top:0.0px;width:7.0px;height:6.5px;background:rgb(208,208,212)"></i><i style="left:0.0px;top:6.2px;width:7.0px;height:6.5px;background:rgb(230,230,234)"></i><i style="left:6.7px;top:6.2px;width:7.0px;height:6.5px;background:rgb(226,226,226)"></i><i style="left:13.3px;top:6.2px;width:7.0px;height:6.5px;background:rgb(226,224,222)"></i></div>
<div class="td" style="left:1020.3px;top:262.7px">在线支付</div>
<div class="abs" style="left:431px;top:282.0px;width:8px;height:8px;border:1px solid #5596e3"></div>
<div class="td" style="left:494.5px;top:286.3px;color:#5a5a5a">8</div>
<div class="td" style="left:529px;top:286.3px">存在</div>
<div class="td" style="left:690.8px;top:286.3px">已完成</div>
<div class="mz" style="left:553.3px;top:283.6px;width:46.7px;height:6.6px"><i style="left:0.0px;top:0.0px;width:7.0px;height:6.9px;background:rgb(230,230,230)"></i><i style="left:6.7px;top:0.0px;width:7.0px;height:6.9px;background:rgb(212,212,216)"></i><i style="left:13.3px;top:0.0px;width:7.0px;height:6.9px;background:rgb(214,212,210)"></i><i style="left:20.0px;top:0.0px;width:7.0px;height:6.9px;background:rgb(208,208,212)"></i><i style="left:26.7px;top:0.0px;width:7.0px;height:6.9px;background:rgb(176,178,182)"></i><i style="left:33.4px;top:0.0px;width:7.0px;height:6.9px;background:rgb(216,218,222)"></i><i style="left:40.0px;top:0.0px;width:7.0px;height:6.9px;background:rgb(220,220,224)"></i></div>
<div class="mz" style="left:607.5px;top:283.6px;width:41.5px;height:6.6px"><i style="left:0.0px;top:0.0px;width:7.2px;height:6.9px;background:rgb(228,226,224)"></i><i style="left:6.9px;top:0.0px;width:7.2px;height:6.9px;background:rgb(212,212,212)"></i><i style="left:13.8px;top:0.0px;width:7.2px;height:6.9px;background:rgb(190,188,186)"></i><i style="left:20.8px;top:0.0px;width:7.2px;height:6.9px;background:rgb(210,208,206)"></i><i style="left:27.7px;top:0.0px;width:7.2px;height:6.9px;background:rgb(200,200,200)"></i><i style="left:34.6px;top:0.0px;width:7.2px;height:6.9px;background:rgb(220,220,224)"></i></div>
<div class="tdl" style="left:649.5px;top:286.3px">...</div>
<div class="tdl" style="left:721px;top:286.3px;color:#777">2</div>
<div class="mz" style="left:726.2px;top:283.6px;width:49.6px;height:6.6px"><i style="left:0.0px;top:0.0px;width:6.5px;height:6.9px;background:rgb(208,206,204)"></i><i style="left:6.2px;top:0.0px;width:6.5px;height:6.9px;background:rgb(204,206,210)"></i><i style="left:12.4px;top:0.0px;width:6.5px;height:6.9px;background:rgb(216,218,222)"></i><i style="left:18.6px;top:0.0px;width:6.5px;height:6.9px;background:rgb(218,216,214)"></i><i style="left:24.8px;top:0.0px;width:6.5px;height:6.9px;background:rgb(176,176,180)"></i><i style="left:31.0px;top:0.0px;width:6.5px;height:6.9px;background:rgb(176,178,182)"></i><i style="left:37.2px;top:0.0px;width:6.5px;height:6.9px;background:rgb(218,218,218)"></i><i style="left:43.4px;top:0.0px;width:6.5px;height:6.9px;background:rgb(224,224,224)"></i></div>
<div class="mz" style="left:789.7px;top:283.6px;width:27.3px;height:6.6px"><i style="left:0.0px;top:0.0px;width:7.1px;height:6.9px;background:rgb(206,208,212)"></i><i style="left:6.8px;top:0.0px;width:7.1px;height:6.9px;background:rgb(220,222,226)"></i><i style="left:13.6px;top:0.0px;width:7.1px;height:6.9px;background:rgb(188,188,192)"></i><i style="left:20.5px;top:0.0px;width:7.1px;height:6.9px;background:rgb(196,196,200)"></i></div>
<div class="mz" style="left:843.8px;top:283.6px;width:27.2px;height:6.6px"><i style="left:0.0px;top:0.0px;width:7.1px;height:6.9px;background:rgb(210,210,214)"></i><i style="left:6.8px;top:0.0px;width:7.1px;height:6.9px;background:rgb(220,220,220)"></i><i style="left:13.6px;top:0.0px;width:7.1px;height:6.9px;background:rgb(188,188,188)"></i><i style="left:20.4px;top:0.0px;width:7.1px;height:6.9px;background:rgb(248,248,248)"></i></div>
<div class="mz" style="left:891.0px;top:283.6px;width:20.0px;height:6.6px"><i style="left:0.0px;top:0.0px;width:7.0px;height:6.9px;background:rgb(186,186,190)"></i><i style="left:6.7px;top:0.0px;width:7.0px;height:6.9px;background:rgb(204,204,204)"></i><i style="left:13.3px;top:0.0px;width:7.0px;height:6.9px;background:rgb(178,176,174)"></i></div>
<div class="td" style="left:1020.3px;top:286.3px">在线支付</div>
<div class="abs" style="left:425px;top:297.84px;width:641.5px;height:23.63px;background:#f1f1f1"></div>
<div class="abs" style="left:482.0px;top:297.84px;width:1px;height:23.63px;background:#fafafa"></div>
<div class="abs" style="left:508.6px;top:297.84px;width:1px;height:23.63px;background:#fafafa"></div>
<div class="abs" style="left:549.0px;top:297.84px;width:1px;height:23.63px;background:#fafafa"></div>
<div class="abs" style="left:606.4px;top:297.84px;width:1px;height:23.63px;background:#fafafa"></div>
<div class="abs" style="left:662.3px;top:297.84px;width:1px;height:23.63px;background:#fafafa"></div>
<div class="abs" style="left:717.9px;top:297.84px;width:1px;height:23.63px;background:#fafafa"></div>
<div class="abs" style="left:774.6px;top:297.84px;width:1px;height:23.63px;background:#fafafa"></div>
<div class="abs" style="left:831.3px;top:297.84px;width:1px;height:23.63px;background:#fafafa"></div>
<div class="abs" style="left:877.6px;top:297.84px;width:1px;height:23.63px;background:#fafafa"></div>
<div class="abs" style="left:923.6px;top:297.84px;width:1px;height:23.63px;background:#fafafa"></div>
<div class="abs" style="left:962.6px;top:297.84px;width:1px;height:23.63px;background:#fafafa"></div>
<div class="abs" style="left:998.2px;top:297.84px;width:1px;height:23.63px;background:#fafafa"></div>
<div class="abs" style="left:1042.3px;top:297.84px;width:1px;height:23.63px;background:#fafafa"></div>
<div class="abs" style="left:431px;top:305.7px;width:8px;height:8px;border:1px solid #5596e3"></div>
<div class="td" style="left:494.5px;top:310.0px;color:#5a5a5a">9</div>
<div class="td" style="left:529px;top:310.0px">存在</div>
<div class="td" style="left:690.8px;top:310.0px">已完成</div>
<div class="mz" style="left:556.3px;top:303.8px;width:43.7px;height:12.4px"><i style="left:0.0px;top:0.0px;width:6.5px;height:6.5px;background:rgb(230,228,226)"></i><i style="left:6.2px;top:0.0px;width:6.5px;height:6.5px;background:rgb(214,216,220)"></i><i style="left:12.5px;top:0.0px;width:6.5px;height:6.5px;background:rgb(216,216,216)"></i><i style="left:18.7px;top:0.0px;width:6.5px;height:6.5px;background:rgb(218,216,214)"></i><i style="left:25.0px;top:0.0px;width:6.5px;height:6.5px;background:rgb(214,214,214)"></i><i style="left:31.2px;top:0.0px;width:6.5px;height:6.5px;background:rgb(220,222,226)"></i><i style="left:37.5px;top:0.0px;width:6.5px;height:6.5px;background:rgb(222,222,226)"></i><i style="left:0.0px;top:6.2px;width:6.5px;height:6.5px;background:rgb(228,228,228)"></i><i style="left:6.2px;top:6.2px;width:6.5px;height:6.5px;background:rgb(222,220,218)"></i><i style="left:12.5px;top:6.2px;width:6.5px;height:6.5px;background:rgb(234,232,230)"></i><i style="left:18.7px;top:6.2px;width:6.5px;height:6.5px;background:rgb(230,230,234)"></i><i style="left:25.0px;top:6.2px;width:6.5px;height:6.5px;background:rgb(232,232,232)"></i><i style="left:31.2px;top:6.2px;width:6.5px;height:6.5px;background:rgb(226,226,226)"></i><i style="left:37.5px;top:6.2px;width:6.5px;height:6.5px;background:rgb(226,226,226)"></i></div>
<div class="mz" style="left:607.5px;top:303.8px;width:39.5px;height:12.4px"><i style="left:0.0px;top:0.0px;width:6.9px;height:6.5px;background:rgb(220,218,216)"></i><i style="left:6.6px;top:0.0px;width:6.9px;height:6.5px;background:rgb(212,212,212)"></i><i style="left:13.2px;top:0.0px;width:6.9px;height:6.5px;background:rgb(220,222,226)"></i><i style="left:19.8px;top:0.0px;width:6.9px;height:6.5px;background:rgb(208,208,208)"></i><i style="left:26.3px;top:0.0px;width:6.9px;height:6.5px;background:rgb(222,222,226)"></i><i style="left:32.9px;top:0.0px;width:6.9px;height:6.5px;background:rgb(210,208,206)"></i><i style="left:0.0px;top:6.2px;width:6.9px;height:6.5px;background:rgb(236,238,242)"></i><i style="left:6.6px;top:6.2px;width:6.9px;height:6.5px;background:rgb(220,218,216)"></i><i style="left:13.2px;top:6.2px;width:6.9px;height:6.5px;background:rgb(216,214,212)"></i><i style="left:19.8px;top:6.2px;width:6.9px;height:6.5px;background:rgb(214,214,218)"></i><i style="left:26.3px;top:6.2px;width:6.9px;height:6.5px;background:rgb(220,218,216)"></i><i style="left:32.9px;top:6.2px;width:6.9px;height:6.5px;background:rgb(220,220,220)"></i></div>
<div class="tdl" style="left:647.5px;top:310.0px">0...</div>
<div class="mz" style="left:721.7px;top:303.8px;width:54.1px;height:12.4px"><i style="left:0.0px;top:0.0px;width:7.1px;height:6.5px;background:rgb(230,232,236)"></i><i style="left:6.8px;top:0.0px;width:7.1px;height:6.5px;background:rgb(222,220,218)"></i><i style="left:13.5px;top:0.0px;width:7.1px;height:6.5px;background:rgb(220,220,224)"></i><i style="left:20.3px;top:0.0px;width:7.1px;height:6.5px;background:rgb(226,226,230)"></i><i style="left:27.0px;top:0.0px;width:7.1px;height:6.5px;background:rgb(224,222,220)"></i><i style="left:33.8px;top:0.0px;width:7.1px;height:6.5px;background:rgb(216,216,216)"></i><i style="left:40.6px;top:0.0px;width:7.1px;height:6.5px;background:rgb(248,248,248)"></i><i style="left:47.3px;top:0.0px;width:7.1px;height:6.5px;background:rgb(248,248,252)"></i><i style="left:0.0px;top:6.2px;width:7.1px;height:6.5px;background:rgb(240,242,246)"></i><i style="left:6.8px;top:6.2px;width:7.1px;height:6.5px;background:rgb(218,218,218)"></i><i style="left:13.5px;top:6.2px;width:7.1px;height:6.5px;background:rgb(224,226,230)"></i><i style="left:20.3px;top:6.2px;width:7.1px;height:6.5px;background:rgb(218,218,222)"></i><i style="left:27.0px;top:6.2px;width:7.1px;height:6.5px;background:rgb(218,218,218)"></i><i style="left:33.8px;top:6.2px;width:7.1px;height:6.5px;background:rgb(224,226,230)"></i><i style="left:40.6px;top:6.2px;width:7.1px;height:6.5px;background:rgb(248,248,248)"></i><i style="left:47.3px;top:6.2px;width:7.1px;height:6.5px;background:rgb(248,250,254)"></i></div>
<div class="mz" style="left:789.7px;top:303.8px;width:27.3px;height:12.4px"><i style="left:0.0px;top:0.0px;width:7.1px;height:6.5px;background:rgb(238,236,234)"></i><i style="left:6.8px;top:0.0px;width:7.1px;height:6.5px;background:rgb(216,216,216)"></i><i style="left:13.6px;top:0.0px;width:7.1px;height:6.5px;background:rgb(220,218,216)"></i><i style="left:20.5px;top:0.0px;width:7.1px;height:6.5px;background:rgb(220,220,224)"></i><i style="left:0.0px;top:6.2px;width:7.1px;height:6.5px;background:rgb(230,232,236)"></i><i style="left:6.8px;top:6.2px;width:7.1px;height:6.5px;background:rgb(220,218,216)"></i><i style="left:13.6px;top:6.2px;width:7.1px;height:6.5px;background:rgb(216,214,212)"></i><i style="left:20.5px;top:6.2px;width:7.1px;height:6.5px;background:rgb(230,232,236)"></i></div>
<div class="mz" style="left:843.8px;top:303.8px;width:27.2px;height:12.4px"><i style="left:0.0px;top:0.0px;width:7.1px;height:6.5px;background:rgb(228,228,228)"></i><i style="left:6.8px;top:0.0px;width:7.1px;height:6.5px;background:rgb(212,212,212)"></i><i style="left:13.6px;top:0.0px;width:7.1px;height:6.5px;background:rgb(222,222,222)"></i><i style="left:20.4px;top:0.0px;width:7.1px;height:6.5px;background:rgb(248,250,254)"></i><i style="left:0.0px;top:6.2px;width:7.1px;height:6.5px;background:rgb(232,232,232)"></i><i style="left:6.8px;top:6.2px;width:7.1px;height:6.5px;background:rgb(226,228,232)"></i><i style="left:13.6px;top:6.2px;width:7.1px;height:6.5px;background:rgb(232,230,228)"></i><i style="left:20.4px;top:6.2px;width:7.1px;height:6.5px;background:rgb(244,244,244)"></i></div>
<div class="mz" style="left:891.0px;top:303.8px;width:20.0px;height:12.4px"><i style="left:0.0px;top:0.0px;width:7.0px;height:6.5px;background:rgb(222,224,228)"></i><i style="left:6.7px;top:0.0px;width:7.0px;height:6.5px;background:rgb(222,220,218)"></i><i style="left:13.3px;top:0.0px;width:7.0px;height:6.5px;background:rgb(214,216,220)"></i><i style="left:0.0px;top:6.2px;width:7.0px;height:6.5px;background:rgb(238,236,234)"></i><i style="left:6.7px;top:6.2px;width:7.0px;height:6.5px;background:rgb(230,232,236)"></i><i style="left:13.3px;top:6.2px;width:7.0px;height:6.5px;background:rgb(218,220,224)"></i></div>
<div class="td" style="left:1020.3px;top:310.0px">在线支付</div>
<div class="abs" style="left:431px;top:329.3px;width:8px;height:8px;border:1px solid #5596e3"></div>
<div class="td" style="left:494.5px;top:333.6px;color:#5a5a5a">10</div>
<div class="td" style="left:529px;top:333.6px">存在</div>
<div class="td" style="left:690.8px;top:333.6px">已完成</div>
<div class="mz" style="left:554.0px;top:330.9px;width:46.0px;height:6.6px"><i style="left:0.0px;top:0.0px;width:6.9px;height:6.9px;background:rgb(214,216,220)"></i><i style="left:6.6px;top:0.0px;width:6.9px;height:6.9px;background:rgb(176,178,182)"></i><i style="left:13.1px;top:0.0px;width:6.9px;height:6.9px;background:rgb(176,178,182)"></i><i style="left:19.7px;top:0.0px;width:6.9px;height:6.9px;background:rgb(196,196,196)"></i><i style="left:26.3px;top:0.0px;width:6.9px;height:6.9px;background:rgb(208,208,212)"></i><i style="left:32.9px;top:0.0px;width:6.9px;height:6.9px;background:rgb(196,196,196)"></i><i style="left:39.4px;top:0.0px;width:6.9px;height:6.9px;background:rgb(214,212,210)"></i></div>
<div class="mz" style="left:607.5px;top:330.9px;width:43.0px;height:6.6px"><i style="left:0.0px;top:0.0px;width:6.4px;height:6.9px;background:rgb(220,218,216)"></i><i style="left:6.1px;top:0.0px;width:6.4px;height:6.9px;background:rgb(208,208,208)"></i><i style="left:12.3px;top:0.0px;width:6.4px;height:6.9px;background:rgb(210,208,206)"></i><i style="left:18.4px;top:0.0px;width:6.4px;height:6.9px;background:rgb(210,208,206)"></i><i style="left:24.6px;top:0.0px;width:6.4px;height:6.9px;background:rgb(176,176,176)"></i><i style="left:30.7px;top:0.0px;width:6.4px;height:6.9px;background:rgb(196,196,196)"></i><i style="left:36.9px;top:0.0px;width:6.4px;height:6.9px;background:rgb(204,204,204)"></i></div>
<div class="tdl" style="left:651.0px;top:333.6px">...</div>
<div class="tdl" style="left:721px;top:333.6px;color:#777">20</div>
<div class="mz" style="left:730.7px;top:330.9px;width:45.1px;height:6.6px"><i style="left:0.0px;top:0.0px;width:6.7px;height:6.9px;background:rgb(198,200,204)"></i><i style="left:6.4px;top:0.0px;width:6.7px;height:6.9px;background:rgb(218,216,214)"></i><i style="left:12.9px;top:0.0px;width:6.7px;height:6.9px;background:rgb(216,218,222)"></i><i style="left:19.3px;top:0.0px;width:6.7px;height:6.9px;background:rgb(200,202,206)"></i><i style="left:25.8px;top:0.0px;width:6.7px;height:6.9px;background:rgb(200,200,200)"></i><i style="left:32.2px;top:0.0px;width:6.7px;height:6.9px;background:rgb(238,238,242)"></i><i style="left:38.7px;top:0.0px;width:6.7px;height:6.9px;background:rgb(244,244,248)"></i></div>
<div class="mz" style="left:789.7px;top:330.9px;width:27.3px;height:6.6px"><i style="left:0.0px;top:0.0px;width:7.1px;height:6.9px;background:rgb(224,222,220)"></i><i style="left:6.8px;top:0.0px;width:7.1px;height:6.9px;background:rgb(190,188,186)"></i><i style="left:13.6px;top:0.0px;width:7.1px;height:6.9px;background:rgb(208,208,208)"></i><i style="left:20.5px;top:0.0px;width:7.1px;height:6.9px;background:rgb(220,220,224)"></i></div>
<div class="mz" style="left:843.8px;top:330.9px;width:27.2px;height:6.6px"><i style="left:0.0px;top:0.0px;width:7.1px;height:6.9px;background:rgb(226,226,230)"></i><i style="left:6.8px;top:0.0px;width:7.1px;height:6.9px;background:rgb(204,206,210)"></i><i style="left:13.6px;top:0.0px;width:7.1px;height:6.9px;background:rgb(196,196,196)"></i><i style="left:20.4px;top:0.0px;width:7.1px;height:6.9px;background:rgb(218,218,218)"></i></div>
<div class="mz" style="left:891.0px;top:330.9px;width:20.0px;height:6.6px"><i style="left:0.0px;top:0.0px;width:7.0px;height:6.9px;background:rgb(232,230,228)"></i><i style="left:6.7px;top:0.0px;width:7.0px;height:6.9px;background:rgb(200,202,206)"></i><i style="left:13.3px;top:0.0px;width:7.0px;height:6.9px;background:rgb(196,196,196)"></i></div>
<div class="td" style="left:1020.3px;top:333.6px">在线支付</div>
<div class="abs" style="left:425px;top:345.10px;width:641.5px;height:23.63px;background:#f1f1f1"></div>
<div class="abs" style="left:482.0px;top:345.10px;width:1px;height:23.63px;background:#fafafa"></div>
<div class="abs" style="left:508.6px;top:345.10px;width:1px;height:23.63px;background:#fafafa"></div>
<div class="abs" style="left:549.0px;top:345.10px;width:1px;height:23.63px;background:#fafafa"></div>
<div class="abs" style="left:606.4px;top:345.10px;width:1px;height:23.63px;background:#fafafa"></div>
<div class="abs" style="left:662.3px;top:345.10px;width:1px;height:23.63px;background:#fafafa"></div>
<div class="abs" style="left:717.9px;top:345.10px;width:1px;height:23.63px;background:#fafafa"></div>
<div class="abs" style="left:774.6px;top:345.10px;width:1px;height:23.63px;background:#fafafa"></div>
<div class="abs" style="left:831.3px;top:345.10px;width:1px;height:23.63px;background:#fafafa"></div>
<div class="abs" style="left:877.6px;top:345.10px;width:1px;height:23.63px;background:#fafafa"></div>
<div class="abs" style="left:923.6px;top:345.10px;width:1px;height:23.63px;background:#fafafa"></div>
<div class="abs" style="left:962.6px;top:345.10px;width:1px;height:23.63px;background:#fafafa"></div>
<div class="abs" style="left:998.2px;top:345.10px;width:1px;height:23.63px;background:#fafafa"></div>
<div class="abs" style="left:1042.3px;top:345.10px;width:1px;height:23.63px;background:#fafafa"></div>
<div class="abs" style="left:431px;top:352.9px;width:8px;height:8px;border:1px solid #5596e3"></div>
<div class="td" style="left:494.5px;top:357.2px;color:#5a5a5a">11</div>
<div class="td" style="left:529px;top:357.2px">存在</div>
<div class="td" style="left:690.8px;top:357.2px">已完成</div>
<div class="mz" style="left:554.0px;top:351.0px;width:46.0px;height:12.4px"><i style="left:0.0px;top:0.0px;width:6.9px;height:6.5px;background:rgb(232,232,232)"></i><i style="left:6.6px;top:0.0px;width:6.9px;height:6.5px;background:rgb(216,216,220)"></i><i style="left:13.1px;top:0.0px;width:6.9px;height:6.5px;background:rgb(216,218,222)"></i><i style="left:19.7px;top:0.0px;width:6.9px;height:6.5px;background:rgb(226,228,232)"></i><i style="left:26.3px;top:0.0px;width:6.9px;height:6.5px;background:rgb(218,218,222)"></i><i style="left:32.9px;top:0.0px;width:6.9px;height:6.5px;background:rgb(218,220,224)"></i><i style="left:39.4px;top:0.0px;width:6.9px;height:6.5px;background:rgb(226,226,226)"></i><i style="left:0.0px;top:6.2px;width:6.9px;height:6.5px;background:rgb(236,236,236)"></i><i style="left:6.6px;top:6.2px;width:6.9px;height:6.5px;background:rgb(224,222,220)"></i><i style="left:13.1px;top:6.2px;width:6.9px;height:6.5px;background:rgb(230,228,226)"></i><i style="left:19.7px;top:6.2px;width:6.9px;height:6.5px;background:rgb(230,228,226)"></i><i style="left:26.3px;top:6.2px;width:6.9px;height:6.5px;background:rgb(230,228,226)"></i><i style="left:32.9px;top:6.2px;width:6.9px;height:6.5px;background:rgb(226,228,232)"></i><i style="left:39.4px;top:6.2px;width:6.9px;height:6.5px;background:rgb(226,226,230)"></i></div>
<div class="mz" style="left:607.5px;top:351.0px;width:45.1px;height:12.4px"><i style="left:0.0px;top:0.0px;width:6.7px;height:6.5px;background:rgb(230,230,234)"></i><i style="left:6.4px;top:0.0px;width:6.7px;height:6.5px;background:rgb(220,218,216)"></i><i style="left:12.9px;top:0.0px;width:6.7px;height:6.5px;background:rgb(222,220,218)"></i><i style="left:19.3px;top:0.0px;width:6.7px;height:6.5px;background:rgb(216,218,222)"></i><i style="left:25.8px;top:0.0px;width:6.7px;height:6.5px;background:rgb(222,222,226)"></i><i style="left:32.2px;top:0.0px;width:6.7px;height:6.5px;background:rgb(214,214,214)"></i><i style="left:38.7px;top:0.0px;width:6.7px;height:6.5px;background:rgb(220,220,220)"></i><i style="left:0.0px;top:6.2px;width:6.7px;height:6.5px;background:rgb(240,240,240)"></i><i style="left:6.4px;top:6.2px;width:6.7px;height:6.5px;background:rgb(222,222,222)"></i><i style="left:12.9px;top:6.2px;width:6.7px;height:6.5px;background:rgb(232,232,236)"></i><i style="left:19.3px;top:6.2px;width:6.7px;height:6.5px;background:rgb(234,232,230)"></i><i style="left:25.8px;top:6.2px;width:6.7px;height:6.5px;background:rgb(220,218,216)"></i><i style="left:32.2px;top:6.2px;width:6.7px;height:6.5px;background:rgb(226,226,226)"></i><i style="left:38.7px;top:6.2px;width:6.7px;height:6.5px;background:rgb(218,218,222)"></i></div>
<div class="tdl" style="left:653.1px;top:357.2px">..</div>
<div class="tdl" style="left:721px;top:357.2px;color:#777">2</div>
<div class="mz" style="left:726.2px;top:351.0px;width:49.6px;height:12.4px"><i style="left:0.0px;top:0.0px;width:6.5px;height:6.5px;background:rgb(230,230,230)"></i><i style="left:6.2px;top:0.0px;width:6.5px;height:6.5px;background:rgb(224,224,224)"></i><i style="left:12.4px;top:0.0px;width:6.5px;height:6.5px;background:rgb(218,220,224)"></i><i style="left:18.6px;top:0.0px;width:6.5px;height:6.5px;background:rgb(222,222,222)"></i><i style="left:24.8px;top:0.0px;width:6.5px;height:6.5px;background:rgb(216,216,216)"></i><i style="left:31.0px;top:0.0px;width:6.5px;height:6.5px;background:rgb(224,224,228)"></i><i style="left:37.2px;top:0.0px;width:6.5px;height:6.5px;background:rgb(244,242,240)"></i><i style="left:43.4px;top:0.0px;width:6.5px;height:6.5px;background:rgb(248,248,252)"></i><i style="left:0.0px;top:6.2px;width:6.5px;height:6.5px;background:rgb(228,228,232)"></i><i style="left:6.2px;top:6.2px;width:6.5px;height:6.5px;background:rgb(228,228,228)"></i><i style="left:12.4px;top:6.2px;width:6.5px;height:6.5px;background:rgb(226,226,226)"></i><i style="left:18.6px;top:6.2px;width:6.5px;height:6.5px;background:rgb(230,232,236)"></i><i style="left:24.8px;top:6.2px;width:6.5px;height:6.5px;background:rgb(230,230,234)"></i><i style="left:31.0px;top:6.2px;width:6.5px;height:6.5px;background:rgb(228,228,228)"></i><i style="left:37.2px;top:6.2px;width:6.5px;height:6.5px;background:rgb(248,248,248)"></i><i style="left:43.4px;top:6.2px;width:6.5px;height:6.5px;background:rgb(248,248,248)"></i></div>
<div class="mz" style="left:789.7px;top:351.0px;width:27.3px;height:12.4px"><i style="left:0.0px;top:0.0px;width:7.1px;height:6.5px;background:rgb(236,236,236)"></i><i style="left:6.8px;top:0.0px;width:7.1px;height:6.5px;background:rgb(208,208,208)"></i><i style="left:13.6px;top:0.0px;width:7.1px;height:6.5px;background:rgb(208,208,208)"></i><i style="left:20.5px;top:0.0px;width:7.1px;height:6.5px;background:rgb(218,218,218)"></i><i style="left:0.0px;top:6.2px;width:7.1px;height:6.5px;background:rgb(232,232,236)"></i><i style="left:6.8px;top:6.2px;width:7.1px;height:6.5px;background:rgb(216,214,212)"></i><i style="left:13.6px;top:6.2px;width:7.1px;height:6.5px;background:rgb(216,214,212)"></i><i style="left:20.5px;top:6.2px;width:7.1px;height:6.5px;background:rgb(228,230,234)"></i></div>
<div class="mz" style="left:843.8px;top:351.0px;width:27.2px;height:12.4px"><i style="left:0.0px;top:0.0px;width:7.1px;height:6.5px;background:rgb(224,222,220)"></i><i style="left:6.8px;top:0.0px;width:7.1px;height:6.5px;background:rgb(224,226,230)"></i><i style="left:13.6px;top:0.0px;width:7.1px;height:6.5px;background:rgb(208,208,208)"></i><i style="left:20.4px;top:0.0px;width:7.1px;height:6.5px;background:rgb(248,248,252)"></i><i style="left:0.0px;top:6.2px;width:7.1px;height:6.5px;background:rgb(224,226,230)"></i><i style="left:6.8px;top:6.2px;width:7.1px;height:6.5px;background:rgb(226,226,226)"></i><i style="left:13.6px;top:6.2px;width:7.1px;height:6.5px;background:rgb(214,214,218)"></i><i style="left:20.4px;top:6.2px;width:7.1px;height:6.5px;background:rgb(244,244,244)"></i></div>
<div class="mz" style="left:891.0px;top:351.0px;width:20.0px;height:12.4px"><i style="left:0.0px;top:0.0px;width:7.0px;height:6.5px;background:rgb(226,228,232)"></i><i style="left:6.7px;top:0.0px;width:7.0px;height:6.5px;background:rgb(224,226,230)"></i><i style="left:13.3px;top:0.0px;width:7.0px;height:6.5px;background:rgb(218,218,222)"></i><i style="left:0.0px;top:6.2px;width:7.0px;height:6.5px;background:rgb(228,228,228)"></i><i style="left:6.7px;top:6.2px;width:7.0px;height:6.5px;background:rgb(220,220,224)"></i><i style="left:13.3px;top:6.2px;width:7.0px;height:6.5px;background:rgb(214,214,214)"></i></div>
<div class="td" style="left:1020.3px;top:357.2px">在线支付</div>
<div class="abs" style="left:431px;top:376.5px;width:8px;height:8px;border:1px solid #5596e3"></div>
<div class="td" style="left:494.5px;top:380.8px;color:#5a5a5a">12</div>
<div class="td" style="left:529px;top:380.8px">存在</div>
<div class="td" style="left:690.8px;top:380.8px">已完成</div>
<div class="mz" style="left:557.3px;top:378.1px;width:40.7px;height:6.6px"><i style="left:0.0px;top:0.0px;width:7.1px;height:6.9px;background:rgb(218,218,218)"></i><i style="left:6.8px;top:0.0px;width:7.1px;height:6.9px;background:rgb(212,212,212)"></i><i style="left:13.6px;top:0.0px;width:7.1px;height:6.9px;background:rgb(200,200,204)"></i><i style="left:20.4px;top:0.0px;width:7.1px;height:6.9px;background:rgb(214,212,210)"></i><i style="left:27.1px;top:0.0px;width:7.1px;height:6.9px;background:rgb(200,200,200)"></i><i style="left:33.9px;top:0.0px;width:7.1px;height:6.9px;background:rgb(200,200,200)"></i></div>
<div class="mz" style="left:607.5px;top:378.1px;width:47.2px;height:6.6px"><i style="left:0.0px;top:0.0px;width:7.0px;height:6.9px;background:rgb(206,208,212)"></i><i style="left:6.7px;top:0.0px;width:7.0px;height:6.9px;background:rgb(188,188,192)"></i><i style="left:13.5px;top:0.0px;width:7.0px;height:6.9px;background:rgb(208,208,212)"></i><i style="left:20.2px;top:0.0px;width:7.0px;height:6.9px;background:rgb(176,178,182)"></i><i style="left:27.0px;top:0.0px;width:7.0px;height:6.9px;background:rgb(212,212,212)"></i><i style="left:33.7px;top:0.0px;width:7.0px;height:6.9px;background:rgb(208,210,214)"></i><i style="left:40.5px;top:0.0px;width:7.0px;height:6.9px;background:rgb(196,196,196)"></i></div>
<div class="tdl" style="left:721px;top:380.8px;color:#777">20</div>
<div class="mz" style="left:730.7px;top:378.1px;width:45.1px;height:6.6px"><i style="left:0.0px;top:0.0px;width:6.7px;height:6.9px;background:rgb(210,210,214)"></i><i style="left:6.4px;top:0.0px;width:6.7px;height:6.9px;background:rgb(208,210,214)"></i><i style="left:12.9px;top:0.0px;width:6.7px;height:6.9px;background:rgb(208,208,212)"></i><i style="left:19.3px;top:0.0px;width:6.7px;height:6.9px;background:rgb(188,188,192)"></i><i style="left:25.8px;top:0.0px;width:6.7px;height:6.9px;background:rgb(208,208,212)"></i><i style="left:32.2px;top:0.0px;width:6.7px;height:6.9px;background:rgb(206,208,212)"></i><i style="left:38.7px;top:0.0px;width:6.7px;height:6.9px;background:rgb(248,248,252)"></i></div>
<div class="mz" style="left:789.7px;top:378.1px;width:27.3px;height:6.6px"><i style="left:0.0px;top:0.0px;width:7.1px;height:6.9px;background:rgb(228,226,224)"></i><i style="left:6.8px;top:0.0px;width:7.1px;height:6.9px;background:rgb(196,196,200)"></i><i style="left:13.6px;top:0.0px;width:7.1px;height:6.9px;background:rgb(204,204,208)"></i><i style="left:20.5px;top:0.0px;width:7.1px;height:6.9px;background:rgb(176,176,176)"></i></div>
<div class="mz" style="left:843.8px;top:378.1px;width:27.2px;height:6.6px"><i style="left:0.0px;top:0.0px;width:7.1px;height:6.9px;background:rgb(188,186,184)"></i><i style="left:6.8px;top:0.0px;width:7.1px;height:6.9px;background:rgb(196,198,202)"></i><i style="left:13.6px;top:0.0px;width:7.1px;height:6.9px;background:rgb(208,210,214)"></i><i style="left:20.4px;top:0.0px;width:7.1px;height:6.9px;background:rgb(250,248,246)"></i></div>
<div class="mz" style="left:891.0px;top:378.1px;width:20.0px;height:6.6px"><i style="left:0.0px;top:0.0px;width:7.0px;height:6.9px;background:rgb(228,226,224)"></i><i style="left:6.7px;top:0.0px;width:7.0px;height:6.9px;background:rgb(208,208,212)"></i><i style="left:13.3px;top:0.0px;width:7.0px;height:6.9px;background:rgb(216,218,222)"></i></div>
<div class="tdl" style="left:903px;top:380.8px">0</div>
<div class="td" style="left:1020.3px;top:380.8px">在线支付</div>
<div class="abs" style="left:425px;top:392.36px;width:641.5px;height:23.63px;background:#f1f1f1"></div>
<div class="abs" style="left:482.0px;top:392.36px;width:1px;height:23.63px;background:#fafafa"></div>
<div class="abs" style="left:508.6px;top:392.36px;width:1px;height:23.63px;background:#fafafa"></div>
<div class="abs" style="left:549.0px;top:392.36px;width:1px;height:23.63px;background:#fafafa"></div>
<div class="abs" style="left:606.4px;top:392.36px;width:1px;height:23.63px;background:#fafafa"></div>
<div class="abs" style="left:662.3px;top:392.36px;width:1px;height:23.63px;background:#fafafa"></div>
<div class="abs" style="left:717.9px;top:392.36px;width:1px;height:23.63px;background:#fafafa"></div>
<div class="abs" style="left:774.6px;top:392.36px;width:1px;height:23.63px;background:#fafafa"></div>
<div class="abs" style="left:831.3px;top:392.36px;width:1px;height:23.63px;background:#fafafa"></div>
<div class="abs" style="left:877.6px;top:392.36px;width:1px;height:23.63px;background:#fafafa"></div>
<div class="abs" style="left:923.6px;top:392.36px;width:1px;height:23.63px;background:#fafafa"></div>
<div class="abs" style="left:962.6px;top:392.36px;width:1px;height:23.63px;background:#fafafa"></div>
<div class="abs" style="left:998.2px;top:392.36px;width:1px;height:23.63px;background:#fafafa"></div>
<div class="abs" style="left:1042.3px;top:392.36px;width:1px;height:23.63px;background:#fafafa"></div>
<div class="abs" style="left:431px;top:400.2px;width:8px;height:8px;border:1px solid #5596e3"></div>
<div class="td" style="left:494.5px;top:404.5px;color:#5a5a5a">13</div>
<div class="td" style="left:529px;top:404.5px">存在</div>
<div class="td" style="left:690.8px;top:404.5px">已完成</div>
<div class="mz" style="left:552.0px;top:398.3px;width:48.0px;height:12.4px"><i style="left:0.0px;top:0.0px;width:7.2px;height:6.5px;background:rgb(234,236,240)"></i><i style="left:6.9px;top:0.0px;width:7.2px;height:6.5px;background:rgb(214,216,220)"></i><i style="left:13.7px;top:0.0px;width:7.2px;height:6.5px;background:rgb(218,218,218)"></i><i style="left:20.6px;top:0.0px;width:7.2px;height:6.5px;background:rgb(212,212,212)"></i><i style="left:27.4px;top:0.0px;width:7.2px;height:6.5px;background:rgb(226,228,232)"></i><i style="left:34.3px;top:0.0px;width:7.2px;height:6.5px;background:rgb(220,222,226)"></i><i style="left:41.1px;top:0.0px;width:7.2px;height:6.5px;background:rgb(226,226,230)"></i><i style="left:0.0px;top:6.2px;width:7.2px;height:6.5px;background:rgb(240,242,246)"></i><i style="left:6.9px;top:6.2px;width:7.2px;height:6.5px;background:rgb(222,222,222)"></i><i style="left:13.7px;top:6.2px;width:7.2px;height:6.5px;background:rgb(226,224,222)"></i><i style="left:20.6px;top:6.2px;width:7.2px;height:6.5px;background:rgb(216,214,212)"></i><i style="left:27.4px;top:6.2px;width:7.2px;height:6.5px;background:rgb(222,224,228)"></i><i style="left:34.3px;top:6.2px;width:7.2px;height:6.5px;background:rgb(220,220,220)"></i><i style="left:41.1px;top:6.2px;width:7.2px;height:6.5px;background:rgb(218,218,218)"></i></div>
<div class="mz" style="left:607.5px;top:398.3px;width:39.5px;height:12.4px"><i style="left:0.0px;top:0.0px;width:6.9px;height:6.5px;background:rgb(228,228,228)"></i><i style="left:6.6px;top:0.0px;width:6.9px;height:6.5px;background:rgb(224,224,224)"></i><i style="left:13.2px;top:0.0px;width:6.9px;height:6.5px;background:rgb(216,216,216)"></i><i style="left:19.8px;top:0.0px;width:6.9px;height:6.5px;background:rgb(214,216,220)"></i><i style="left:26.3px;top:0.0px;width:6.9px;height:6.5px;background:rgb(218,218,218)"></i><i style="left:32.9px;top:0.0px;width:6.9px;height:6.5px;background:rgb(216,216,216)"></i><i style="left:0.0px;top:6.2px;width:6.9px;height:6.5px;background:rgb(232,232,236)"></i><i style="left:6.6px;top:6.2px;width:6.9px;height:6.5px;background:rgb(224,226,230)"></i><i style="left:13.2px;top:6.2px;width:6.9px;height:6.5px;background:rgb(228,228,232)"></i><i style="left:19.8px;top:6.2px;width:6.9px;height:6.5px;background:rgb(226,226,226)"></i><i style="left:26.3px;top:6.2px;width:6.9px;height:6.5px;background:rgb(230,230,230)"></i><i style="left:32.9px;top:6.2px;width:6.9px;height:6.5px;background:rgb(228,228,232)"></i></div>
<div class="tdl" style="left:647.5px;top:404.5px">0...</div>
<div class="mz" style="left:721.7px;top:398.3px;width:54.1px;height:12.4px"><i style="left:0.0px;top:0.0px;width:7.1px;height:6.5px;background:rgb(234,234,234)"></i><i style="left:6.8px;top:0.0px;width:7.1px;height:6.5px;background:rgb(222,224,228)"></i><i style="left:13.5px;top:0.0px;width:7.1px;height:6.5px;background:rgb(220,218,216)"></i><i style="left:20.3px;top:0.0px;width:7.1px;height:6.5px;background:rgb(214,216,220)"></i><i style="left:27.0px;top:0.0px;width:7.1px;height:6.5px;background:rgb(220,220,220)"></i><i style="left:33.8px;top:0.0px;width:7.1px;height:6.5px;background:rgb(222,222,222)"></i><i style="left:40.6px;top:0.0px;width:7.1px;height:6.5px;background:rgb(244,244,248)"></i><i style="left:47.3px;top:0.0px;width:7.1px;height:6.5px;background:rgb(250,248,246)"></i><i style="left:0.0px;top:6.2px;width:7.1px;height:6.5px;background:rgb(228,228,232)"></i><i style="left:6.8px;top:6.2px;width:7.1px;height:6.5px;background:rgb(224,226,230)"></i><i style="left:13.5px;top:6.2px;width:7.1px;height:6.5px;background:rgb(226,224,222)"></i><i style="left:20.3px;top:6.2px;width:7.1px;height:6.5px;background:rgb(230,232,236)"></i><i style="left:27.0px;top:6.2px;width:7.1px;height:6.5px;background:rgb(226,224,222)"></i><i style="left:33.8px;top:6.2px;width:7.1px;height:6.5px;background:rgb(222,222,222)"></i><i style="left:40.6px;top:6.2px;width:7.1px;height:6.5px;background:rgb(250,248,246)"></i><i style="left:47.3px;top:6.2px;width:7.1px;height:6.5px;background:rgb(248,248,248)"></i></div>
<div class="mz" style="left:789.7px;top:398.3px;width:27.3px;height:12.4px"><i style="left:0.0px;top:0.0px;width:7.1px;height:6.5px;background:rgb(224,224,224)"></i><i style="left:6.8px;top:0.0px;width:7.1px;height:6.5px;background:rgb(218,216,214)"></i><i style="left:13.6px;top:0.0px;width:7.1px;height:6.5px;background:rgb(214,216,220)"></i><i style="left:20.5px;top:0.0px;width:7.1px;height:6.5px;background:rgb(226,224,222)"></i><i style="left:0.0px;top:6.2px;width:7.1px;height:6.5px;background:rgb(226,224,222)"></i><i style="left:6.8px;top:6.2px;width:7.1px;height:6.5px;background:rgb(226,224,222)"></i><i style="left:13.6px;top:6.2px;width:7.1px;height:6.5px;background:rgb(230,230,230)"></i><i style="left:20.5px;top:6.2px;width:7.1px;height:6.5px;background:rgb(232,232,236)"></i></div>
<div class="mz" style="left:843.8px;top:398.3px;width:27.2px;height:12.4px"><i style="left:0.0px;top:0.0px;width:7.1px;height:6.5px;background:rgb(228,228,228)"></i><i style="left:6.8px;top:0.0px;width:7.1px;height:6.5px;background:rgb(214,212,210)"></i><i style="left:13.6px;top:0.0px;width:7.1px;height:6.5px;background:rgb(216,214,212)"></i><i style="left:20.4px;top:0.0px;width:7.1px;height:6.5px;background:rgb(248,248,248)"></i><i style="left:0.0px;top:6.2px;width:7.1px;height:6.5px;background:rgb(240,240,240)"></i><i style="left:6.8px;top:6.2px;width:7.1px;height:6.5px;background:rgb(218,218,222)"></i><i style="left:13.6px;top:6.2px;width:7.1px;height:6.5px;background:rgb(226,224,222)"></i><i style="left:20.4px;top:6.2px;width:7.1px;height:6.5px;background:rgb(244,246,250)"></i></div>
<div class="mz" style="left:891.0px;top:398.3px;width:20.0px;height:12.4px"><i style="left:0.0px;top:0.0px;width:7.0px;height:6.5px;background:rgb(226,224,222)"></i><i style="left:6.7px;top:0.0px;width:7.0px;height:6.5px;background:rgb(212,212,216)"></i><i style="left:13.3px;top:0.0px;width:7.0px;height:6.5px;background:rgb(226,226,230)"></i><i style="left:0.0px;top:6.2px;width:7.0px;height:6.5px;background:rgb(228,228,228)"></i><i style="left:6.7px;top:6.2px;width:7.0px;height:6.5px;background:rgb(218,218,218)"></i><i style="left:13.3px;top:6.2px;width:7.0px;height:6.5px;background:rgb(232,230,228)"></i></div>
<div class="tdl" style="left:903px;top:404.5px">0</div>
<div class="td" style="left:1020.3px;top:404.5px">在线支付</div>
<!--TABLE_E-->
</body></html>
